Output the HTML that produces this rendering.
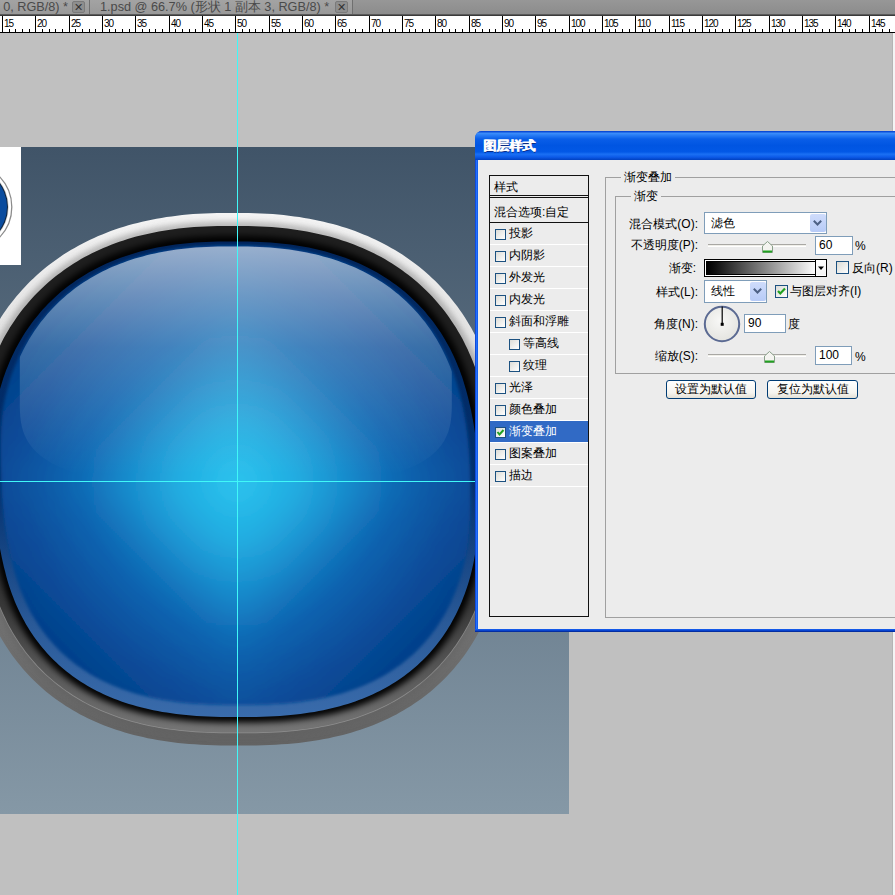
<!DOCTYPE html>
<html><head><meta charset="utf-8">
<style>
*{box-sizing:border-box}
html,body{margin:0;padding:0}
body{width:895px;height:895px;overflow:hidden;position:relative;background:#c0c0c0;font-family:"Liberation Sans",sans-serif;}
.abs{position:absolute}
#tabs{left:0;top:0;width:895px;height:15px;background:linear-gradient(#979797,#8c8c8c);border-bottom:1px solid #5a5a5a}
.tab{position:absolute;top:0;height:14px;background:linear-gradient(#a3a3a3,#999);border-right:1px solid #6f6f6f;color:#4a4a4a;font-size:12.7px;line-height:14px;white-space:nowrap;overflow:hidden}
.cls{position:absolute;top:1px;width:13px;height:12px;border:1px solid #7a7a7a;border-radius:2px;background:#8e8e8e;color:#333;font-size:11px;line-height:10px;text-align:center}
#ruler{left:0;top:15px;width:895px;height:18px;background:#fff;border-top:1px solid #3a3a3a;border-bottom:1px solid #000}
.mj{position:absolute;top:0;width:1px;height:17px;background:#000}
.mn{position:absolute;top:13px;width:1px;height:4px;background:#000}
.lb{position:absolute;top:3px;font-size:10px;line-height:10px;color:#000;letter-spacing:-1px}
#canvas{left:0;top:147px;width:569px;height:667px;background:linear-gradient(#405468,#8598a6)}
#wrect{left:0;top:147px;width:21px;height:118px;background:#fff;overflow:hidden}
#svg{left:0;top:0}
.gv{left:237px;top:33px;width:1px;height:862px;background:#40f8f8}
.gh{left:0;top:481px;width:475px;height:1px;background:#40f8f8}
#dlg{left:475px;top:131px;width:440px;height:501px;background:#0a50d8;border-radius:7px 7px 0 0}
#title{left:0;top:0;width:440px;height:29px;border-radius:7px 7px 0 0;background:linear-gradient(#0a4ad6 0,#0a4ad6 1px,#3f90fa 2px,#2a7ef6 4px,#0a5ee8 8px,#0055e2 50%,#0258e6 72%,#1a70f4 80%,#0c5ae8 90%,#0040c0 100%)}
#title span{position:absolute;left:8px;top:6px;color:#fff;font-weight:bold;font-size:13px;text-shadow:0.6px 0 0 #fff,1.4px 1px 0 #0a2a80}
#content{left:3px;top:29px;width:437px;height:469px;background:#ececec}
#list{left:11px;top:15px;width:100px;height:442px;border:1px solid #111;background:#ececec}
.row{position:absolute;left:0;width:98px;height:22px;border-bottom:1px solid #fff;font-size:12px;line-height:22px;color:#000;white-space:nowrap}
.cb{position:absolute;top:6px;width:11px;height:11px;border:1px solid #1c5180;background:linear-gradient(135deg,#dcdcd7,#fff)}
.grp{position:absolute;border:1px solid #a0a0a0}
.glab{position:absolute;background:#ececec;font-size:12px;line-height:14px;padding:0 3px;color:#000}
.lab{position:absolute;font-size:12px;line-height:14px;color:#000;text-align:right;white-space:nowrap}
.combo{position:absolute;border:1px solid #7f9db9;background:#fff;font-size:12px;line-height:19px;padding-left:6px}
.dd{position:absolute;right:1px;top:1px;bottom:1px;width:15px;background:linear-gradient(#d6e3fc,#b4c9f6);border-radius:2px}
.inp{position:absolute;border:1px solid #7f9db9;background:#fff;font-size:12px;line-height:16px;padding-left:3px}
.track{position:absolute;height:3px;border-top:1px solid #9d9c99;background:#ecebe6;border-bottom:1px solid #fff}
.thumb{position:absolute;width:11px;height:12px}
.btn{position:absolute;border:1px solid #003c74;border-radius:3px;background:linear-gradient(#fff,#f0f0ea 80%,#d6d0c5);font-size:12px;line-height:17px;text-align:center}
.plab{position:absolute;font-size:12px;line-height:14px;color:#000;white-space:nowrap}
.pgrp{position:absolute;border:1px solid #a0a0a0;box-sizing:border-box}
.pgl{position:absolute;background:#ececec;font-size:12px;line-height:14px;padding:0 3px;color:#000}
.pcombo{position:absolute;border:1px solid #7f9db9;background:#fff;font-size:12px;padding-left:6px;box-sizing:border-box}
.pdd{position:absolute;background:linear-gradient(#cfdcfb,#b7cbf7);border-radius:2px}
.pinp{position:absolute;border:1px solid #7f9db9;background:#fff;font-size:12px;padding-left:3px;box-sizing:border-box}
.pcb{position:absolute;width:13px;height:13px;border:1px solid #1c5180;background:linear-gradient(135deg,#dcdcd7,#fdfdfd);box-sizing:border-box}
.ptrack{position:absolute;height:3px;border-top:1px solid #a9a8a4;background:#f0efe9;border-bottom:1px solid #fff;box-sizing:border-box}
.pbtn{position:absolute;border:1px solid #003c74;border-radius:3px;background:linear-gradient(#fff,#f5f4ef 70%,#e3e0d6);font-size:12px;text-align:center;box-sizing:border-box}
</style></head><body>
<div id="tabs" class="abs">
  <div class="tab" style="left:0;width:90px"><span style="position:absolute;right:21px">0, RGB/8) *</span><div class="cls" style="left:72px">&#x2715;</div></div>
  <div class="tab" style="left:90px;width:263px"><span style="position:absolute;left:10px">1.psd @ 66.7% (形状 1 副本 3, RGB/8) *</span><div class="cls" style="left:245px">&#x2715;</div></div>
</div>
<div id="ruler" class="abs"><div class="mj" style="left:2px"></div><div class="mn" style="left:9px"></div><div class="mn" style="left:15px"></div><div class="mn" style="left:22px"></div><div class="mn" style="left:29px"></div><div class="mj" style="left:35px"></div><div class="mn" style="left:42px"></div><div class="mn" style="left:49px"></div><div class="mn" style="left:55px"></div><div class="mn" style="left:62px"></div><div class="mj" style="left:69px"></div><div class="mn" style="left:75px"></div><div class="mn" style="left:82px"></div><div class="mn" style="left:89px"></div><div class="mn" style="left:95px"></div><div class="mj" style="left:102px"></div><div class="mn" style="left:109px"></div><div class="mn" style="left:115px"></div><div class="mn" style="left:122px"></div><div class="mn" style="left:129px"></div><div class="mj" style="left:135px"></div><div class="mn" style="left:142px"></div><div class="mn" style="left:149px"></div><div class="mn" style="left:155px"></div><div class="mn" style="left:162px"></div><div class="mj" style="left:169px"></div><div class="mn" style="left:175px"></div><div class="mn" style="left:182px"></div><div class="mn" style="left:189px"></div><div class="mn" style="left:195px"></div><div class="mj" style="left:202px"></div><div class="mn" style="left:209px"></div><div class="mn" style="left:215px"></div><div class="mn" style="left:222px"></div><div class="mn" style="left:229px"></div><div class="mj" style="left:235px"></div><div class="mn" style="left:242px"></div><div class="mn" style="left:249px"></div><div class="mn" style="left:255px"></div><div class="mn" style="left:262px"></div><div class="mj" style="left:269px"></div><div class="mn" style="left:275px"></div><div class="mn" style="left:282px"></div><div class="mn" style="left:289px"></div><div class="mn" style="left:295px"></div><div class="mj" style="left:302px"></div><div class="mn" style="left:309px"></div><div class="mn" style="left:315px"></div><div class="mn" style="left:322px"></div><div class="mn" style="left:329px"></div><div class="mj" style="left:335px"></div><div class="mn" style="left:342px"></div><div class="mn" style="left:349px"></div><div class="mn" style="left:355px"></div><div class="mn" style="left:362px"></div><div class="mj" style="left:369px"></div><div class="mn" style="left:375px"></div><div class="mn" style="left:382px"></div><div class="mn" style="left:389px"></div><div class="mn" style="left:395px"></div><div class="mj" style="left:402px"></div><div class="mn" style="left:409px"></div><div class="mn" style="left:415px"></div><div class="mn" style="left:422px"></div><div class="mn" style="left:429px"></div><div class="mj" style="left:435px"></div><div class="mn" style="left:442px"></div><div class="mn" style="left:449px"></div><div class="mn" style="left:455px"></div><div class="mn" style="left:462px"></div><div class="mj" style="left:469px"></div><div class="mn" style="left:475px"></div><div class="mn" style="left:482px"></div><div class="mn" style="left:489px"></div><div class="mn" style="left:495px"></div><div class="mj" style="left:502px"></div><div class="mn" style="left:509px"></div><div class="mn" style="left:515px"></div><div class="mn" style="left:522px"></div><div class="mn" style="left:529px"></div><div class="mj" style="left:535px"></div><div class="mn" style="left:542px"></div><div class="mn" style="left:549px"></div><div class="mn" style="left:555px"></div><div class="mn" style="left:562px"></div><div class="mj" style="left:569px"></div><div class="mn" style="left:575px"></div><div class="mn" style="left:582px"></div><div class="mn" style="left:589px"></div><div class="mn" style="left:595px"></div><div class="mj" style="left:602px"></div><div class="mn" style="left:609px"></div><div class="mn" style="left:615px"></div><div class="mn" style="left:622px"></div><div class="mn" style="left:629px"></div><div class="mj" style="left:635px"></div><div class="mn" style="left:642px"></div><div class="mn" style="left:649px"></div><div class="mn" style="left:655px"></div><div class="mn" style="left:662px"></div><div class="mj" style="left:669px"></div><div class="mn" style="left:675px"></div><div class="mn" style="left:682px"></div><div class="mn" style="left:689px"></div><div class="mn" style="left:695px"></div><div class="mj" style="left:702px"></div><div class="mn" style="left:709px"></div><div class="mn" style="left:715px"></div><div class="mn" style="left:722px"></div><div class="mn" style="left:729px"></div><div class="mj" style="left:735px"></div><div class="mn" style="left:742px"></div><div class="mn" style="left:749px"></div><div class="mn" style="left:755px"></div><div class="mn" style="left:762px"></div><div class="mj" style="left:769px"></div><div class="mn" style="left:775px"></div><div class="mn" style="left:782px"></div><div class="mn" style="left:789px"></div><div class="mn" style="left:795px"></div><div class="mj" style="left:802px"></div><div class="mn" style="left:809px"></div><div class="mn" style="left:815px"></div><div class="mn" style="left:822px"></div><div class="mn" style="left:829px"></div><div class="mj" style="left:835px"></div><div class="mn" style="left:842px"></div><div class="mn" style="left:849px"></div><div class="mn" style="left:855px"></div><div class="mn" style="left:862px"></div><div class="mj" style="left:869px"></div><div class="mn" style="left:875px"></div><div class="mn" style="left:882px"></div><div class="mn" style="left:889px"></div><div class="mn" style="left:895px"></div><div class="lb" style="left:4px">15</div><div class="lb" style="left:37px">20</div><div class="lb" style="left:71px">25</div><div class="lb" style="left:104px">30</div><div class="lb" style="left:137px">35</div><div class="lb" style="left:171px">40</div><div class="lb" style="left:204px">45</div><div class="lb" style="left:237px">50</div><div class="lb" style="left:271px">55</div><div class="lb" style="left:304px">60</div><div class="lb" style="left:337px">65</div><div class="lb" style="left:371px">70</div><div class="lb" style="left:404px">75</div><div class="lb" style="left:437px">80</div><div class="lb" style="left:471px">85</div><div class="lb" style="left:504px">90</div><div class="lb" style="left:537px">95</div><div class="lb" style="left:571px">100</div><div class="lb" style="left:604px">105</div><div class="lb" style="left:637px">110</div><div class="lb" style="left:671px">115</div><div class="lb" style="left:704px">120</div><div class="lb" style="left:737px">125</div><div class="lb" style="left:771px">130</div><div class="lb" style="left:804px">135</div><div class="lb" style="left:837px">140</div><div class="lb" style="left:871px">145</div></div>
<div id="canvas" class="abs"></div>
<div id="wrect" class="abs">
 <svg width="21" height="118" style="position:absolute;left:0;top:0">
  <circle cx="-31.8" cy="60" r="43.6" fill="#fff" stroke="#8c8c8c" stroke-width="1.3"/>
  <circle cx="-31.8" cy="60" r="40.6" fill="#d8d8d8"/>
  <circle cx="-31.8" cy="60" r="39.8" fill="#10243c"/>
  <circle cx="-31.8" cy="60" r="38.8" fill="#0a4c9e"/>
 </svg>
</div>
<svg id="svg" class="abs" width="895" height="895">
 <defs>
  <linearGradient id="gOuter" x1="0" y1="213" x2="0" y2="747" gradientUnits="userSpaceOnUse">
   <stop offset="0" stop-color="#f4f4f4"/><stop offset="0.3" stop-color="#dedede"/>
   <stop offset="0.55" stop-color="#969696"/><stop offset="0.75" stop-color="#727272"/><stop offset="1" stop-color="#626262"/>
  </linearGradient>
  <linearGradient id="gRing" x1="0" y1="226" x2="0" y2="734" gradientUnits="userSpaceOnUse">
   <stop offset="0" stop-color="#1e1e1e"/><stop offset="0.5" stop-color="#1e1e1e"/><stop offset="0.75" stop-color="#383838"/><stop offset="1" stop-color="#767676"/>
  </linearGradient>
  <linearGradient id="gLine" x1="0" y1="226" x2="0" y2="734" gradientUnits="userSpaceOnUse">
   <stop offset="0" stop-color="#d0d0d0" stop-opacity="0"/><stop offset="0.5" stop-color="#b0b0b0" stop-opacity="0"/><stop offset="0.75" stop-color="#b0b0b0" stop-opacity="0.35"/><stop offset="1" stop-color="#b4b4b4" stop-opacity="0.55"/>
  </linearGradient>
  <clipPath id="clipBodyIn"><path d="M469.2,476.6 L469.4,485.9 L469.4,492.9 L469.4,499.2 L469.4,505.2 L469.3,510.8 L469.1,516.2 L468.8,521.4 L468.5,526.4 L468.1,531.3 L467.7,536.0 L467.2,540.6 L466.6,545.0 L465.9,549.3 L465.2,553.4 L464.5,557.4 L463.7,561.3 L462.8,565.1 L461.8,568.9 L460.8,572.7 L459.7,576.4 L458.5,580.0 L457.3,583.6 L456.1,587.1 L454.8,590.5 L453.4,593.9 L452.0,597.2 L450.6,600.5 L449.1,603.6 L447.5,606.8 L445.9,609.9 L444.3,612.9 L442.6,615.8 L440.9,618.8 L439.1,621.6 L437.3,624.4 L435.4,627.2 L433.5,629.9 L431.5,632.5 L429.5,635.1 L427.4,637.7 L425.3,640.2 L423.1,642.6 L420.9,645.0 L418.7,647.4 L416.4,649.7 L414.0,652.0 L411.6,654.2 L409.1,656.3 L406.6,658.5 L404.1,660.6 L401.5,662.6 L398.8,664.6 L396.1,666.5 L393.3,668.4 L390.5,670.3 L387.6,672.1 L384.7,673.8 L381.7,675.5 L378.7,677.2 L375.6,678.8 L372.4,680.4 L369.2,681.9 L365.9,683.4 L362.6,684.8 L359.2,686.2 L355.7,687.5 L352.2,688.8 L348.6,690.1 L344.9,691.3 L341.2,692.4 L337.4,693.5 L333.5,694.5 L329.5,695.5 L325.5,696.4 L321.3,697.3 L317.1,698.1 L312.8,698.9 L308.4,699.6 L303.9,700.3 L299.2,700.9 L294.5,701.5 L289.6,702.0 L284.5,702.4 L279.2,702.8 L273.8,703.1 L268.1,703.4 L262.0,703.6 L255.5,703.8 L248.2,703.9 L238.3,703.9 L228.4,703.9 L221.1,703.8 L214.6,703.6 L208.5,703.4 L202.8,703.1 L197.4,702.8 L192.1,702.4 L187.0,702.0 L182.1,701.5 L177.4,700.9 L172.7,700.3 L168.2,699.6 L163.8,698.9 L159.5,698.1 L155.3,697.3 L151.1,696.4 L147.1,695.5 L143.1,694.5 L139.2,693.5 L135.4,692.4 L131.7,691.3 L128.0,690.1 L124.4,688.8 L120.9,687.5 L117.4,686.2 L114.0,684.8 L110.7,683.4 L107.4,681.9 L104.2,680.4 L101.0,678.8 L97.9,677.2 L94.9,675.5 L91.9,673.8 L89.0,672.1 L86.1,670.3 L83.3,668.4 L80.5,666.5 L77.8,664.6 L75.1,662.6 L72.5,660.6 L70.0,658.5 L67.5,656.3 L65.0,654.2 L62.6,652.0 L60.2,649.7 L57.9,647.4 L55.7,645.0 L53.5,642.6 L51.3,640.2 L49.2,637.7 L47.1,635.1 L45.1,632.5 L43.1,629.9 L41.2,627.2 L39.3,624.4 L37.5,621.6 L35.7,618.8 L34.0,615.8 L32.3,612.9 L30.7,609.9 L29.1,606.8 L27.5,603.6 L26.0,600.5 L24.6,597.2 L23.2,593.9 L21.8,590.5 L20.5,587.1 L19.3,583.6 L18.1,580.0 L16.9,576.4 L15.8,572.7 L14.8,568.9 L13.8,564.9 L12.8,560.8 L11.8,556.6 L10.8,552.2 L9.9,547.8 L9.1,543.3 L8.2,538.6 L7.4,533.8 L6.7,529.0 L5.9,524.0 L5.3,518.8 L4.6,513.6 L4.1,508.1 L3.5,502.5 L3.1,496.6 L2.6,490.4 L2.3,483.6 L2.0,475.1 L1.7,465.7 L1.6,458.9 L1.5,452.9 L1.4,447.3 L1.5,442.1 L1.6,437.2 L1.8,432.4 L2.0,427.9 L2.3,423.5 L2.7,419.2 L3.2,415.0 L3.8,411.0 L4.4,407.0 L5.1,403.0 L5.9,399.2 L6.7,395.4 L7.6,391.6 L8.7,387.8 L9.8,384.0 L10.9,380.2 L12.2,376.5 L13.4,372.9 L14.7,369.3 L16.1,365.8 L17.6,362.3 L19.0,358.9 L20.6,355.6 L22.2,352.3 L23.8,349.0 L25.5,345.8 L27.2,342.7 L29.0,339.6 L30.9,336.6 L32.8,333.6 L34.7,330.6 L36.7,327.7 L38.7,324.9 L40.8,322.1 L43.0,319.4 L45.2,316.7 L47.4,314.0 L49.7,311.4 L52.0,308.9 L54.4,306.4 L56.9,303.9 L59.4,301.5 L61.9,299.2 L64.5,296.9 L67.2,294.6 L69.9,292.4 L72.6,290.3 L75.4,288.1 L78.2,286.1 L81.1,284.1 L84.1,282.1 L87.1,280.2 L90.2,278.3 L93.3,276.5 L96.4,274.7 L99.6,273.0 L102.9,271.3 L106.2,269.7 L109.6,268.1 L113.1,266.6 L116.5,265.2 L120.1,263.7 L123.7,262.4 L127.4,261.1 L131.1,259.8 L134.9,258.6 L138.7,257.5 L142.7,256.4 L146.6,255.3 L150.7,254.3 L154.8,253.4 L159.0,252.5 L163.3,251.7 L167.6,251.0 L172.1,250.3 L176.6,249.6 L181.3,249.0 L186.0,248.5 L190.9,248.0 L195.9,247.6 L201.1,247.3 L206.4,247.0 L212.1,246.8 L218.0,246.6 L224.6,246.5 L232.9,246.5 L241.2,246.5 L247.8,246.6 L253.7,246.8 L259.4,247.0 L264.7,247.3 L269.9,247.6 L274.9,248.0 L279.8,248.5 L284.5,249.0 L289.2,249.6 L293.7,250.3 L298.2,251.0 L302.5,251.7 L306.8,252.5 L311.0,253.4 L315.1,254.3 L319.2,255.3 L323.1,256.4 L327.1,257.5 L330.9,258.6 L334.7,259.8 L338.4,261.1 L342.1,262.4 L345.7,263.7 L349.3,265.2 L352.7,266.6 L356.2,268.1 L359.6,269.7 L362.9,271.3 L366.2,273.0 L369.4,274.7 L372.5,276.5 L375.6,278.3 L378.7,280.2 L381.7,282.1 L384.7,284.1 L387.6,286.1 L390.4,288.1 L393.2,290.3 L395.9,292.4 L398.6,294.6 L401.3,296.9 L403.9,299.2 L406.4,301.5 L408.9,303.9 L411.4,306.4 L413.8,308.9 L416.1,311.4 L418.4,314.0 L420.6,316.7 L422.8,319.4 L425.0,322.1 L427.1,324.9 L429.1,327.7 L431.1,330.6 L433.0,333.6 L434.9,336.6 L436.8,339.6 L438.6,342.7 L440.3,345.8 L442.0,349.0 L443.6,352.3 L445.2,355.6 L446.8,358.9 L448.2,362.3 L449.7,365.8 L451.1,369.3 L452.4,372.9 L453.6,376.5 L454.9,380.2 L456.0,384.0 L457.1,387.8 L458.2,391.8 L459.3,395.9 L460.3,400.1 L461.2,404.3 L462.2,408.5 L463.0,412.8 L463.8,417.1 L464.6,421.5 L465.3,425.9 L466.0,430.5 L466.6,435.2 L467.1,440.0 L467.6,445.0 L468.0,450.2 L468.4,455.7 L468.7,461.5 L469.0,468.1Z"/></clipPath>
  <clipPath id="clipOuter"><path d="M506.8,480.0 L506.9,489.3 L507.0,496.6 L507.0,503.4 L507.0,509.7 L506.8,515.9 L506.6,521.8 L506.4,527.5 L506.0,533.1 L505.6,538.5 L505.1,543.9 L504.5,549.1 L503.8,554.2 L503.1,559.2 L502.3,564.0 L501.3,568.8 L500.4,573.5 L499.3,578.1 L498.1,582.6 L496.9,587.0 L495.6,591.4 L494.3,595.7 L492.8,599.9 L491.3,604.1 L489.8,608.2 L488.2,612.2 L486.5,616.2 L484.8,620.1 L483.0,623.9 L481.1,627.7 L479.1,631.5 L477.2,635.1 L475.1,638.8 L473.0,642.3 L470.8,645.8 L468.5,649.3 L466.2,652.7 L463.9,656.0 L461.4,659.3 L458.9,662.5 L456.4,665.6 L453.8,668.7 L451.1,671.8 L448.3,674.7 L445.5,677.7 L442.7,680.5 L439.8,683.3 L436.8,686.1 L433.8,688.8 L430.7,691.4 L427.5,694.0 L424.3,696.5 L421.0,698.9 L417.7,701.3 L414.3,703.6 L410.8,705.9 L407.3,708.1 L403.7,710.2 L400.1,712.3 L396.4,714.4 L392.7,716.3 L388.9,718.2 L385.0,720.0 L381.1,721.8 L377.1,723.5 L373.0,725.2 L368.9,726.8 L364.7,728.3 L360.5,729.7 L356.2,731.1 L351.8,732.5 L347.4,733.7 L342.9,734.9 L338.3,736.1 L333.6,737.1 L328.9,738.2 L324.1,739.1 L319.2,740.0 L314.2,740.8 L309.1,741.5 L303.9,742.2 L298.6,742.9 L293.1,743.4 L287.5,743.9 L281.8,744.3 L275.8,744.7 L269.6,745.0 L263.1,745.2 L256.2,745.4 L248.5,745.5 L238.3,745.5 L228.1,745.5 L220.4,745.4 L213.5,745.2 L207.0,745.0 L200.8,744.7 L194.8,744.3 L189.1,743.9 L183.5,743.4 L178.0,742.9 L172.7,742.2 L167.5,741.5 L162.4,740.8 L157.4,740.0 L152.5,739.1 L147.7,738.2 L143.0,737.1 L138.3,736.1 L133.7,734.9 L129.2,733.7 L124.8,732.5 L120.4,731.1 L116.1,729.7 L111.9,728.3 L107.7,726.8 L103.6,725.2 L99.5,723.5 L95.5,721.8 L91.6,720.0 L87.7,718.2 L83.9,716.3 L80.2,714.4 L76.5,712.3 L72.9,710.2 L69.3,708.1 L65.8,705.9 L62.3,703.6 L58.9,701.3 L55.6,698.9 L52.3,696.5 L49.1,694.0 L45.9,691.4 L42.8,688.8 L39.8,686.1 L36.8,683.3 L33.9,680.5 L31.1,677.7 L28.3,674.7 L25.5,671.8 L22.8,668.7 L20.2,665.6 L17.7,662.5 L15.2,659.3 L12.7,656.0 L10.4,652.7 L8.1,649.3 L5.8,645.8 L3.6,642.3 L1.5,638.8 L-0.6,635.1 L-2.5,631.5 L-4.5,627.7 L-6.4,623.9 L-8.2,620.1 L-9.9,616.2 L-11.6,612.2 L-13.2,608.2 L-14.7,604.1 L-16.2,599.9 L-17.7,595.7 L-19.0,591.4 L-20.3,587.0 L-21.5,582.6 L-22.7,578.1 L-23.8,573.5 L-24.9,568.8 L-25.9,564.0 L-26.9,559.2 L-27.9,554.2 L-28.8,549.1 L-29.7,543.9 L-30.5,538.5 L-31.3,533.1 L-32.0,527.5 L-32.7,521.8 L-33.4,515.9 L-33.9,509.7 L-34.4,503.4 L-34.9,496.6 L-35.3,489.3 L-35.6,480.0 L-35.9,470.8 L-36.0,463.7 L-36.1,457.3 L-36.2,451.3 L-36.1,445.6 L-36.0,440.0 L-35.8,434.7 L-35.5,429.4 L-35.1,424.3 L-34.6,419.3 L-34.1,414.4 L-33.4,409.6 L-32.7,404.8 L-31.8,400.1 L-30.9,395.4 L-29.9,390.8 L-28.8,386.2 L-27.5,381.7 L-26.2,377.2 L-24.9,372.8 L-23.5,368.5 L-22.0,364.2 L-20.4,360.0 L-18.8,355.8 L-17.1,351.7 L-15.3,347.6 L-13.5,343.6 L-11.6,339.7 L-9.6,335.8 L-7.6,331.9 L-5.5,328.1 L-3.3,324.4 L-1.1,320.7 L1.2,317.1 L3.5,313.6 L6.0,310.1 L8.4,306.6 L11.0,303.2 L13.6,299.9 L16.3,296.6 L19.0,293.4 L21.8,290.3 L24.6,287.2 L27.6,284.1 L30.5,281.1 L33.6,278.2 L36.7,275.3 L39.8,272.5 L43.0,269.8 L46.3,267.1 L49.6,264.5 L53.0,261.9 L56.5,259.4 L60.0,257.0 L63.5,254.6 L67.2,252.3 L70.8,250.0 L74.6,247.9 L78.4,245.7 L82.2,243.7 L86.1,241.7 L90.1,239.8 L94.1,237.9 L98.2,236.1 L102.3,234.4 L106.5,232.7 L110.7,231.1 L115.0,229.5 L119.4,228.1 L123.8,226.7 L128.3,225.3 L132.9,224.1 L137.5,222.9 L142.1,221.7 L146.9,220.7 L151.7,219.7 L156.5,218.7 L161.5,217.9 L166.5,217.1 L171.6,216.4 L176.9,215.7 L182.2,215.1 L187.6,214.6 L193.1,214.1 L198.8,213.8 L204.7,213.5 L210.8,213.2 L217.3,213.0 L224.2,212.9 L232.9,212.9 L241.6,212.9 L248.5,213.0 L255.0,213.2 L261.1,213.5 L267.0,213.8 L272.7,214.1 L278.2,214.6 L283.6,215.1 L288.9,215.7 L294.2,216.4 L299.3,217.1 L304.3,217.9 L309.3,218.7 L314.1,219.7 L318.9,220.7 L323.7,221.7 L328.3,222.9 L332.9,224.1 L337.5,225.3 L342.0,226.7 L346.4,228.1 L350.8,229.5 L355.1,231.1 L359.3,232.7 L363.5,234.4 L367.6,236.1 L371.7,237.9 L375.7,239.8 L379.7,241.7 L383.6,243.7 L387.4,245.7 L391.2,247.9 L395.0,250.0 L398.6,252.3 L402.3,254.6 L405.8,257.0 L409.3,259.4 L412.8,261.9 L416.2,264.5 L419.5,267.1 L422.8,269.8 L426.0,272.5 L429.1,275.3 L432.2,278.2 L435.3,281.1 L438.2,284.1 L441.2,287.2 L444.0,290.3 L446.8,293.4 L449.5,296.6 L452.2,299.9 L454.8,303.2 L457.4,306.6 L459.8,310.1 L462.3,313.6 L464.6,317.1 L466.9,320.7 L469.1,324.4 L471.3,328.1 L473.4,331.9 L475.4,335.8 L477.4,339.7 L479.3,343.6 L481.1,347.6 L482.9,351.7 L484.6,355.8 L486.2,360.0 L487.8,364.2 L489.3,368.5 L490.7,372.8 L492.0,377.2 L493.3,381.7 L494.6,386.2 L495.7,390.8 L496.9,395.4 L497.9,400.1 L499.0,404.8 L499.9,409.6 L500.8,414.4 L501.7,419.3 L502.5,424.3 L503.2,429.4 L503.9,434.7 L504.5,440.0 L505.0,445.6 L505.5,451.3 L505.9,457.3 L506.3,463.7 L506.6,470.8Z"/></clipPath>
  <clipPath id="clipR2"><path d="M493.8,480.2 L494.0,489.5 L494.0,496.7 L494.0,503.3 L494.0,509.5 L493.8,515.5 L493.6,521.2 L493.4,526.8 L493.0,532.2 L492.6,537.4 L492.1,542.5 L491.6,547.5 L490.9,552.4 L490.2,557.1 L489.5,561.7 L488.6,566.3 L487.7,570.7 L486.7,575.0 L485.6,579.2 L484.4,583.4 L483.2,587.6 L481.9,591.6 L480.5,595.6 L479.1,599.6 L477.7,603.4 L476.2,607.2 L474.6,611.0 L472.9,614.7 L471.2,618.3 L469.5,621.9 L467.7,625.4 L465.8,628.8 L463.9,632.2 L461.9,635.6 L459.8,638.8 L457.7,642.1 L455.6,645.2 L453.3,648.3 L451.1,651.4 L448.7,654.4 L446.4,657.3 L443.9,660.2 L441.4,663.1 L438.9,665.9 L436.3,668.6 L433.6,671.3 L430.9,673.9 L428.1,676.4 L425.2,678.9 L422.3,681.4 L419.4,683.8 L416.4,686.1 L413.3,688.4 L410.2,690.7 L407.0,692.8 L403.8,695.0 L400.5,697.0 L397.2,699.0 L393.8,701.0 L390.3,702.9 L386.8,704.7 L383.2,706.5 L379.5,708.2 L375.8,709.9 L372.1,711.5 L368.2,713.1 L364.4,714.6 L360.4,716.0 L356.4,717.4 L352.3,718.7 L348.1,720.0 L343.9,721.2 L339.6,722.3 L335.2,723.4 L330.8,724.4 L326.3,725.4 L321.7,726.3 L317.0,727.2 L312.2,727.9 L307.3,728.7 L302.3,729.3 L297.1,729.9 L291.9,730.5 L286.5,730.9 L280.9,731.4 L275.1,731.7 L269.1,732.0 L262.7,732.2 L255.9,732.4 L248.4,732.5 L238.3,732.5 L228.2,732.5 L220.7,732.4 L213.9,732.2 L207.5,732.0 L201.5,731.7 L195.7,731.4 L190.1,730.9 L184.7,730.5 L179.5,729.9 L174.3,729.3 L169.3,728.7 L164.4,727.9 L159.6,727.2 L154.9,726.3 L150.3,725.4 L145.8,724.4 L141.4,723.4 L137.0,722.3 L132.7,721.2 L128.5,720.0 L124.3,718.7 L120.2,717.4 L116.2,716.0 L112.2,714.6 L108.4,713.1 L104.5,711.5 L100.8,709.9 L97.1,708.2 L93.4,706.5 L89.8,704.7 L86.3,702.9 L82.8,701.0 L79.4,699.0 L76.1,697.0 L72.8,695.0 L69.6,692.8 L66.4,690.7 L63.3,688.4 L60.2,686.1 L57.2,683.8 L54.3,681.4 L51.4,678.9 L48.5,676.4 L45.7,673.9 L43.0,671.3 L40.3,668.6 L37.7,665.9 L35.2,663.1 L32.7,660.2 L30.2,657.3 L27.9,654.4 L25.5,651.4 L23.3,648.3 L21.0,645.2 L18.9,642.1 L16.8,638.8 L14.7,635.6 L12.7,632.2 L10.8,628.8 L8.9,625.4 L7.1,621.9 L5.4,618.3 L3.7,614.7 L2.0,611.0 L0.4,607.2 L-1.1,603.4 L-2.5,599.6 L-3.9,595.6 L-5.3,591.6 L-6.6,587.6 L-7.8,583.4 L-9.0,579.2 L-10.1,574.9 L-11.2,570.5 L-12.2,566.0 L-13.2,561.3 L-14.2,556.6 L-15.1,551.8 L-16.0,546.8 L-16.9,541.8 L-17.7,536.6 L-18.4,531.3 L-19.1,525.9 L-19.8,520.3 L-20.4,514.6 L-21.0,508.6 L-21.5,502.4 L-21.9,495.9 L-22.3,488.7 L-22.6,479.7 L-22.9,470.4 L-23.0,463.5 L-23.1,457.2 L-23.2,451.3 L-23.1,445.8 L-23.0,440.4 L-22.8,435.3 L-22.5,430.3 L-22.2,425.4 L-21.7,420.7 L-21.2,416.0 L-20.6,411.4 L-19.9,406.9 L-19.1,402.5 L-18.2,398.1 L-17.2,393.8 L-16.2,389.5 L-15.0,385.2 L-13.8,380.9 L-12.5,376.8 L-11.1,372.6 L-9.7,368.6 L-8.2,364.6 L-6.7,360.6 L-5.1,356.7 L-3.4,352.9 L-1.7,349.1 L0.1,345.4 L1.9,341.7 L3.8,338.1 L5.8,334.6 L7.9,331.0 L9.9,327.6 L12.1,324.2 L14.3,320.9 L16.6,317.6 L18.9,314.3 L21.3,311.1 L23.7,308.0 L26.3,304.9 L28.8,301.9 L31.4,299.0 L34.1,296.1 L36.8,293.2 L39.6,290.4 L42.5,287.7 L45.4,285.0 L48.4,282.3 L51.4,279.8 L54.4,277.2 L57.6,274.8 L60.8,272.4 L64.0,270.0 L67.3,267.7 L70.7,265.5 L74.1,263.3 L77.5,261.2 L81.0,259.1 L84.6,257.1 L88.2,255.2 L91.9,253.3 L95.7,251.5 L99.5,249.7 L103.3,248.0 L107.2,246.4 L111.2,244.8 L115.2,243.3 L119.3,241.8 L123.5,240.4 L127.7,239.1 L131.9,237.8 L136.2,236.6 L140.6,235.5 L145.1,234.4 L149.6,233.4 L154.2,232.4 L158.9,231.5 L163.6,230.7 L168.5,229.9 L173.4,229.2 L178.4,228.6 L183.5,228.0 L188.7,227.5 L194.1,227.1 L199.6,226.7 L205.3,226.4 L211.3,226.2 L217.5,226.0 L224.4,225.9 L232.9,225.9 L241.4,225.9 L248.3,226.0 L254.5,226.2 L260.5,226.4 L266.2,226.7 L271.7,227.1 L277.1,227.5 L282.3,228.0 L287.4,228.6 L292.4,229.2 L297.3,229.9 L302.2,230.7 L306.9,231.5 L311.6,232.4 L316.2,233.4 L320.7,234.4 L325.2,235.5 L329.6,236.6 L333.9,237.8 L338.1,239.1 L342.3,240.4 L346.5,241.8 L350.6,243.3 L354.6,244.8 L358.6,246.4 L362.5,248.0 L366.3,249.7 L370.1,251.5 L373.9,253.3 L377.6,255.2 L381.2,257.1 L384.8,259.1 L388.3,261.2 L391.7,263.3 L395.1,265.5 L398.5,267.7 L401.8,270.0 L405.0,272.4 L408.2,274.8 L411.4,277.2 L414.4,279.8 L417.4,282.3 L420.4,285.0 L423.3,287.7 L426.2,290.4 L429.0,293.2 L431.7,296.1 L434.4,299.0 L437.0,301.9 L439.5,304.9 L442.1,308.0 L444.5,311.1 L446.9,314.3 L449.2,317.6 L451.5,320.9 L453.7,324.2 L455.9,327.6 L457.9,331.0 L460.0,334.6 L462.0,338.1 L463.9,341.7 L465.7,345.4 L467.5,349.1 L469.2,352.9 L470.9,356.7 L472.5,360.6 L474.0,364.6 L475.5,368.6 L476.9,372.6 L478.3,376.8 L479.6,380.9 L480.8,385.2 L482.0,389.5 L483.1,393.9 L484.2,398.4 L485.2,402.9 L486.2,407.4 L487.2,412.0 L488.0,416.7 L488.9,421.4 L489.6,426.3 L490.3,431.2 L491.0,436.2 L491.6,441.4 L492.1,446.7 L492.6,452.3 L493.0,458.1 L493.3,464.4 L493.6,471.2Z"/></clipPath>
  <filter id="blur3" x="-10%" y="-10%" width="120%" height="120%"><feGaussianBlur stdDeviation="3"/></filter>
  <linearGradient id="gBand" x1="0" y1="240" x2="0" y2="721" gradientUnits="userSpaceOnUse">
   <stop offset="0" stop-color="#00245a"/><stop offset="0.5" stop-color="#02306e"/><stop offset="0.8" stop-color="#2a5a98"/><stop offset="1" stop-color="#3a6cac"/>
  </linearGradient>
<linearGradient id="gDq1" gradientUnits="userSpaceOnUse" x1="237" y1="481" x2="477.0" y2="241.0"><stop offset="0" stop-color="#2bc5ef"/><stop offset="0.125" stop-color="#27b5e6"/><stop offset="0.25" stop-color="#1d94d4"/><stop offset="0.375" stop-color="#1068b4"/><stop offset="0.54" stop-color="#0a50a0"/><stop offset="0.75" stop-color="#023f8a"/><stop offset="1" stop-color="#01357a"/></linearGradient>
<linearGradient id="gDq2" gradientUnits="userSpaceOnUse" x1="237" y1="481" x2="-3.0" y2="241.0"><stop offset="0" stop-color="#2bc5ef"/><stop offset="0.125" stop-color="#27b5e6"/><stop offset="0.25" stop-color="#1d94d4"/><stop offset="0.375" stop-color="#1068b4"/><stop offset="0.54" stop-color="#0a50a0"/><stop offset="0.75" stop-color="#023f8a"/><stop offset="1" stop-color="#01357a"/></linearGradient>
<linearGradient id="gDq3" gradientUnits="userSpaceOnUse" x1="237" y1="481" x2="-3.0" y2="721.0"><stop offset="0" stop-color="#2bc5ef"/><stop offset="0.125" stop-color="#27b5e6"/><stop offset="0.25" stop-color="#1d94d4"/><stop offset="0.375" stop-color="#1068b4"/><stop offset="0.54" stop-color="#0a50a0"/><stop offset="0.75" stop-color="#023f8a"/><stop offset="1" stop-color="#01357a"/></linearGradient>
<linearGradient id="gDq4" gradientUnits="userSpaceOnUse" x1="237" y1="481" x2="477.0" y2="721.0"><stop offset="0" stop-color="#2bc5ef"/><stop offset="0.125" stop-color="#27b5e6"/><stop offset="0.25" stop-color="#1d94d4"/><stop offset="0.375" stop-color="#1068b4"/><stop offset="0.54" stop-color="#0a50a0"/><stop offset="0.75" stop-color="#023f8a"/><stop offset="1" stop-color="#01357a"/></linearGradient>
<clipPath id="clipBody"><path d="M470.2,476.6 L470.4,485.9 L470.4,492.9 L470.4,499.2 L470.4,505.2 L470.3,510.8 L470.1,516.2 L469.8,521.5 L469.5,526.5 L469.1,531.4 L468.7,536.1 L468.1,540.7 L467.6,545.1 L466.9,549.4 L466.2,553.6 L465.5,557.6 L464.6,561.5 L463.7,565.3 L462.8,569.1 L461.7,572.9 L460.6,576.7 L459.5,580.3 L458.2,583.9 L457.0,587.4 L455.7,590.9 L454.3,594.3 L452.9,597.6 L451.5,600.9 L450.0,604.1 L448.4,607.2 L446.8,610.3 L445.2,613.4 L443.5,616.3 L441.7,619.3 L439.9,622.1 L438.1,625.0 L436.2,627.7 L434.3,630.5 L432.3,633.1 L430.3,635.7 L428.2,638.3 L426.0,640.8 L423.9,643.3 L421.6,645.7 L419.4,648.1 L417.1,650.4 L414.7,652.7 L412.3,654.9 L409.8,657.1 L407.3,659.2 L404.7,661.3 L402.1,663.4 L399.4,665.4 L396.7,667.3 L393.9,669.2 L391.1,671.1 L388.2,672.9 L385.2,674.7 L382.2,676.4 L379.2,678.1 L376.0,679.7 L372.9,681.3 L369.6,682.8 L366.3,684.3 L363.0,685.7 L359.6,687.1 L356.1,688.5 L352.5,689.8 L348.9,691.0 L345.2,692.2 L341.5,693.4 L337.6,694.4 L333.7,695.5 L329.8,696.5 L325.7,697.4 L321.5,698.3 L317.3,699.1 L313.0,699.9 L308.5,700.6 L304.0,701.3 L299.3,701.9 L294.6,702.5 L289.7,703.0 L284.6,703.4 L279.3,703.8 L273.8,704.1 L268.1,704.4 L262.1,704.6 L255.5,704.8 L248.2,704.9 L238.3,704.9 L228.4,704.9 L221.1,704.8 L214.5,704.6 L208.5,704.4 L202.8,704.1 L197.3,703.8 L192.0,703.4 L186.9,703.0 L182.0,702.5 L177.3,701.9 L172.6,701.3 L168.1,700.6 L163.6,699.9 L159.3,699.1 L155.1,698.3 L150.9,697.4 L146.8,696.5 L142.9,695.5 L139.0,694.4 L135.1,693.4 L131.4,692.2 L127.7,691.0 L124.1,689.8 L120.5,688.5 L117.0,687.1 L113.6,685.7 L110.3,684.3 L107.0,682.8 L103.7,681.3 L100.6,679.7 L97.4,678.1 L94.4,676.4 L91.4,674.7 L88.4,672.9 L85.5,671.1 L82.7,669.2 L79.9,667.3 L77.2,665.4 L74.5,663.4 L71.9,661.3 L69.3,659.2 L66.8,657.1 L64.3,654.9 L61.9,652.7 L59.5,650.4 L57.2,648.1 L55.0,645.7 L52.7,643.3 L50.6,640.8 L48.4,638.3 L46.3,635.7 L44.3,633.1 L42.3,630.5 L40.4,627.7 L38.5,625.0 L36.7,622.1 L34.9,619.3 L33.1,616.3 L31.4,613.4 L29.8,610.3 L28.2,607.2 L26.6,604.1 L25.1,600.9 L23.7,597.6 L22.3,594.3 L20.9,590.9 L19.6,587.4 L18.4,583.9 L17.1,580.3 L16.0,576.7 L14.9,572.9 L13.8,569.1 L12.8,565.2 L11.8,561.0 L10.8,556.8 L9.9,552.4 L9.0,548.0 L8.1,543.4 L7.2,538.8 L6.4,534.0 L5.7,529.1 L4.9,524.1 L4.3,519.0 L3.6,513.7 L3.1,508.2 L2.5,502.6 L2.1,496.7 L1.6,490.4 L1.3,483.7 L1.0,475.1 L0.7,465.8 L0.6,458.9 L0.5,452.9 L0.4,447.3 L0.5,442.1 L0.6,437.1 L0.8,432.4 L1.0,427.8 L1.4,423.4 L1.8,419.1 L2.2,414.9 L2.8,410.8 L3.4,406.8 L4.1,402.9 L4.9,399.0 L5.7,395.2 L6.7,391.4 L7.7,387.5 L8.8,383.7 L10.0,379.9 L11.2,376.2 L12.5,372.6 L13.8,369.0 L15.2,365.4 L16.6,361.9 L18.1,358.5 L19.7,355.1 L21.3,351.8 L22.9,348.6 L24.6,345.4 L26.4,342.2 L28.2,339.1 L30.0,336.0 L31.9,333.0 L33.9,330.1 L35.9,327.2 L37.9,324.3 L40.0,321.5 L42.2,318.7 L44.4,316.0 L46.7,313.4 L49.0,310.8 L51.3,308.2 L53.7,305.7 L56.2,303.2 L58.7,300.8 L61.2,298.4 L63.9,296.1 L66.5,293.9 L69.2,291.6 L72.0,289.5 L74.8,287.3 L77.7,285.3 L80.6,283.2 L83.5,281.3 L86.6,279.3 L89.6,277.4 L92.8,275.6 L95.9,273.8 L99.2,272.1 L102.5,270.4 L105.8,268.8 L109.2,267.2 L112.7,265.7 L116.2,264.2 L119.7,262.8 L123.4,261.4 L127.0,260.1 L130.8,258.9 L134.6,257.7 L138.5,256.5 L142.4,255.4 L146.4,254.4 L150.5,253.4 L154.6,252.4 L158.8,251.6 L163.1,250.7 L167.5,250.0 L171.9,249.3 L176.5,248.6 L181.1,248.0 L185.9,247.5 L190.8,247.1 L195.8,246.6 L201.0,246.3 L206.4,246.0 L212.0,245.8 L218.0,245.6 L224.6,245.5 L232.9,245.5 L241.2,245.5 L247.8,245.6 L253.8,245.8 L259.4,246.0 L264.8,246.3 L270.0,246.6 L275.0,247.1 L279.9,247.5 L284.7,248.0 L289.3,248.6 L293.9,249.3 L298.3,250.0 L302.7,250.7 L307.0,251.6 L311.2,252.4 L315.3,253.4 L319.4,254.4 L323.4,255.4 L327.3,256.5 L331.2,257.7 L335.0,258.9 L338.8,260.1 L342.4,261.4 L346.1,262.8 L349.6,264.2 L353.1,265.7 L356.6,267.2 L360.0,268.8 L363.3,270.4 L366.6,272.1 L369.9,273.8 L373.0,275.6 L376.2,277.4 L379.2,279.3 L382.3,281.3 L385.2,283.2 L388.1,285.3 L391.0,287.3 L393.8,289.5 L396.6,291.6 L399.3,293.9 L401.9,296.1 L404.6,298.4 L407.1,300.8 L409.6,303.2 L412.1,305.7 L414.5,308.2 L416.8,310.8 L419.1,313.4 L421.4,316.0 L423.6,318.7 L425.8,321.5 L427.9,324.3 L429.9,327.2 L431.9,330.1 L433.9,333.0 L435.8,336.0 L437.6,339.1 L439.4,342.2 L441.2,345.4 L442.9,348.6 L444.5,351.8 L446.1,355.1 L447.7,358.5 L449.2,361.9 L450.6,365.4 L452.0,369.0 L453.3,372.6 L454.6,376.2 L455.8,379.9 L457.0,383.7 L458.1,387.5 L459.2,391.5 L460.2,395.7 L461.2,399.8 L462.2,404.0 L463.1,408.3 L464.0,412.6 L464.8,416.9 L465.6,421.3 L466.3,425.8 L466.9,430.4 L467.6,435.1 L468.1,439.9 L468.6,444.9 L469.0,450.1 L469.4,455.6 L469.7,461.5 L470.0,468.0Z"/></clipPath>
  <radialGradient id="gBody" cx="237" cy="481" r="250" gradientUnits="userSpaceOnUse">
   <stop offset="0" stop-color="#2ac4ee"/><stop offset="0.25" stop-color="#22a6dc"/>
   <stop offset="0.6" stop-color="#0c65b0"/><stop offset="0.85" stop-color="#044a94"/><stop offset="1" stop-color="#023f88"/>
  </radialGradient>
  <linearGradient id="gGloss" x1="0" y1="245" x2="0" y2="500" gradientUnits="userSpaceOnUse">
   <stop offset="0" stop-color="#c8d2e0" stop-opacity="0.75"/><stop offset="0.4" stop-color="#b4c8dc" stop-opacity="0.32"/><stop offset="0.9" stop-color="#a8c8e4" stop-opacity="0"/>
  </linearGradient>
  <filter id="blurBig" x="-10%" y="-10%" width="120%" height="120%"><feGaussianBlur stdDeviation="14"/></filter>
  <filter id="blur2" x="-5%" y="-5%" width="110%" height="110%"><feGaussianBlur stdDeviation="1.5"/></filter>
 </defs>
 <path d="M506.8,480.0 L506.9,489.3 L507.0,496.6 L507.0,503.4 L507.0,509.7 L506.8,515.9 L506.6,521.8 L506.4,527.5 L506.0,533.1 L505.6,538.5 L505.1,543.9 L504.5,549.1 L503.8,554.2 L503.1,559.2 L502.3,564.0 L501.3,568.8 L500.4,573.5 L499.3,578.1 L498.1,582.6 L496.9,587.0 L495.6,591.4 L494.3,595.7 L492.8,599.9 L491.3,604.1 L489.8,608.2 L488.2,612.2 L486.5,616.2 L484.8,620.1 L483.0,623.9 L481.1,627.7 L479.1,631.5 L477.2,635.1 L475.1,638.8 L473.0,642.3 L470.8,645.8 L468.5,649.3 L466.2,652.7 L463.9,656.0 L461.4,659.3 L458.9,662.5 L456.4,665.6 L453.8,668.7 L451.1,671.8 L448.3,674.7 L445.5,677.7 L442.7,680.5 L439.8,683.3 L436.8,686.1 L433.8,688.8 L430.7,691.4 L427.5,694.0 L424.3,696.5 L421.0,698.9 L417.7,701.3 L414.3,703.6 L410.8,705.9 L407.3,708.1 L403.7,710.2 L400.1,712.3 L396.4,714.4 L392.7,716.3 L388.9,718.2 L385.0,720.0 L381.1,721.8 L377.1,723.5 L373.0,725.2 L368.9,726.8 L364.7,728.3 L360.5,729.7 L356.2,731.1 L351.8,732.5 L347.4,733.7 L342.9,734.9 L338.3,736.1 L333.6,737.1 L328.9,738.2 L324.1,739.1 L319.2,740.0 L314.2,740.8 L309.1,741.5 L303.9,742.2 L298.6,742.9 L293.1,743.4 L287.5,743.9 L281.8,744.3 L275.8,744.7 L269.6,745.0 L263.1,745.2 L256.2,745.4 L248.5,745.5 L238.3,745.5 L228.1,745.5 L220.4,745.4 L213.5,745.2 L207.0,745.0 L200.8,744.7 L194.8,744.3 L189.1,743.9 L183.5,743.4 L178.0,742.9 L172.7,742.2 L167.5,741.5 L162.4,740.8 L157.4,740.0 L152.5,739.1 L147.7,738.2 L143.0,737.1 L138.3,736.1 L133.7,734.9 L129.2,733.7 L124.8,732.5 L120.4,731.1 L116.1,729.7 L111.9,728.3 L107.7,726.8 L103.6,725.2 L99.5,723.5 L95.5,721.8 L91.6,720.0 L87.7,718.2 L83.9,716.3 L80.2,714.4 L76.5,712.3 L72.9,710.2 L69.3,708.1 L65.8,705.9 L62.3,703.6 L58.9,701.3 L55.6,698.9 L52.3,696.5 L49.1,694.0 L45.9,691.4 L42.8,688.8 L39.8,686.1 L36.8,683.3 L33.9,680.5 L31.1,677.7 L28.3,674.7 L25.5,671.8 L22.8,668.7 L20.2,665.6 L17.7,662.5 L15.2,659.3 L12.7,656.0 L10.4,652.7 L8.1,649.3 L5.8,645.8 L3.6,642.3 L1.5,638.8 L-0.6,635.1 L-2.5,631.5 L-4.5,627.7 L-6.4,623.9 L-8.2,620.1 L-9.9,616.2 L-11.6,612.2 L-13.2,608.2 L-14.7,604.1 L-16.2,599.9 L-17.7,595.7 L-19.0,591.4 L-20.3,587.0 L-21.5,582.6 L-22.7,578.1 L-23.8,573.5 L-24.9,568.8 L-25.9,564.0 L-26.9,559.2 L-27.9,554.2 L-28.8,549.1 L-29.7,543.9 L-30.5,538.5 L-31.3,533.1 L-32.0,527.5 L-32.7,521.8 L-33.4,515.9 L-33.9,509.7 L-34.4,503.4 L-34.9,496.6 L-35.3,489.3 L-35.6,480.0 L-35.9,470.8 L-36.0,463.7 L-36.1,457.3 L-36.2,451.3 L-36.1,445.6 L-36.0,440.0 L-35.8,434.7 L-35.5,429.4 L-35.1,424.3 L-34.6,419.3 L-34.1,414.4 L-33.4,409.6 L-32.7,404.8 L-31.8,400.1 L-30.9,395.4 L-29.9,390.8 L-28.8,386.2 L-27.5,381.7 L-26.2,377.2 L-24.9,372.8 L-23.5,368.5 L-22.0,364.2 L-20.4,360.0 L-18.8,355.8 L-17.1,351.7 L-15.3,347.6 L-13.5,343.6 L-11.6,339.7 L-9.6,335.8 L-7.6,331.9 L-5.5,328.1 L-3.3,324.4 L-1.1,320.7 L1.2,317.1 L3.5,313.6 L6.0,310.1 L8.4,306.6 L11.0,303.2 L13.6,299.9 L16.3,296.6 L19.0,293.4 L21.8,290.3 L24.6,287.2 L27.6,284.1 L30.5,281.1 L33.6,278.2 L36.7,275.3 L39.8,272.5 L43.0,269.8 L46.3,267.1 L49.6,264.5 L53.0,261.9 L56.5,259.4 L60.0,257.0 L63.5,254.6 L67.2,252.3 L70.8,250.0 L74.6,247.9 L78.4,245.7 L82.2,243.7 L86.1,241.7 L90.1,239.8 L94.1,237.9 L98.2,236.1 L102.3,234.4 L106.5,232.7 L110.7,231.1 L115.0,229.5 L119.4,228.1 L123.8,226.7 L128.3,225.3 L132.9,224.1 L137.5,222.9 L142.1,221.7 L146.9,220.7 L151.7,219.7 L156.5,218.7 L161.5,217.9 L166.5,217.1 L171.6,216.4 L176.9,215.7 L182.2,215.1 L187.6,214.6 L193.1,214.1 L198.8,213.8 L204.7,213.5 L210.8,213.2 L217.3,213.0 L224.2,212.9 L232.9,212.9 L241.6,212.9 L248.5,213.0 L255.0,213.2 L261.1,213.5 L267.0,213.8 L272.7,214.1 L278.2,214.6 L283.6,215.1 L288.9,215.7 L294.2,216.4 L299.3,217.1 L304.3,217.9 L309.3,218.7 L314.1,219.7 L318.9,220.7 L323.7,221.7 L328.3,222.9 L332.9,224.1 L337.5,225.3 L342.0,226.7 L346.4,228.1 L350.8,229.5 L355.1,231.1 L359.3,232.7 L363.5,234.4 L367.6,236.1 L371.7,237.9 L375.7,239.8 L379.7,241.7 L383.6,243.7 L387.4,245.7 L391.2,247.9 L395.0,250.0 L398.6,252.3 L402.3,254.6 L405.8,257.0 L409.3,259.4 L412.8,261.9 L416.2,264.5 L419.5,267.1 L422.8,269.8 L426.0,272.5 L429.1,275.3 L432.2,278.2 L435.3,281.1 L438.2,284.1 L441.2,287.2 L444.0,290.3 L446.8,293.4 L449.5,296.6 L452.2,299.9 L454.8,303.2 L457.4,306.6 L459.8,310.1 L462.3,313.6 L464.6,317.1 L466.9,320.7 L469.1,324.4 L471.3,328.1 L473.4,331.9 L475.4,335.8 L477.4,339.7 L479.3,343.6 L481.1,347.6 L482.9,351.7 L484.6,355.8 L486.2,360.0 L487.8,364.2 L489.3,368.5 L490.7,372.8 L492.0,377.2 L493.3,381.7 L494.6,386.2 L495.7,390.8 L496.9,395.4 L497.9,400.1 L499.0,404.8 L499.9,409.6 L500.8,414.4 L501.7,419.3 L502.5,424.3 L503.2,429.4 L503.9,434.7 L504.5,440.0 L505.0,445.6 L505.5,451.3 L505.9,457.3 L506.3,463.7 L506.6,470.8Z" fill="url(#gOuter)"/>
 <g clip-path="url(#clipOuter)"><path d="M493.8,480.2 L494.0,489.5 L494.0,496.7 L494.0,503.3 L494.0,509.5 L493.8,515.5 L493.6,521.2 L493.4,526.8 L493.0,532.2 L492.6,537.4 L492.1,542.5 L491.6,547.5 L490.9,552.4 L490.2,557.1 L489.5,561.7 L488.6,566.3 L487.7,570.7 L486.7,575.0 L485.6,579.2 L484.4,583.4 L483.2,587.6 L481.9,591.6 L480.5,595.6 L479.1,599.6 L477.7,603.4 L476.2,607.2 L474.6,611.0 L472.9,614.7 L471.2,618.3 L469.5,621.9 L467.7,625.4 L465.8,628.8 L463.9,632.2 L461.9,635.6 L459.8,638.8 L457.7,642.1 L455.6,645.2 L453.3,648.3 L451.1,651.4 L448.7,654.4 L446.4,657.3 L443.9,660.2 L441.4,663.1 L438.9,665.9 L436.3,668.6 L433.6,671.3 L430.9,673.9 L428.1,676.4 L425.2,678.9 L422.3,681.4 L419.4,683.8 L416.4,686.1 L413.3,688.4 L410.2,690.7 L407.0,692.8 L403.8,695.0 L400.5,697.0 L397.2,699.0 L393.8,701.0 L390.3,702.9 L386.8,704.7 L383.2,706.5 L379.5,708.2 L375.8,709.9 L372.1,711.5 L368.2,713.1 L364.4,714.6 L360.4,716.0 L356.4,717.4 L352.3,718.7 L348.1,720.0 L343.9,721.2 L339.6,722.3 L335.2,723.4 L330.8,724.4 L326.3,725.4 L321.7,726.3 L317.0,727.2 L312.2,727.9 L307.3,728.7 L302.3,729.3 L297.1,729.9 L291.9,730.5 L286.5,730.9 L280.9,731.4 L275.1,731.7 L269.1,732.0 L262.7,732.2 L255.9,732.4 L248.4,732.5 L238.3,732.5 L228.2,732.5 L220.7,732.4 L213.9,732.2 L207.5,732.0 L201.5,731.7 L195.7,731.4 L190.1,730.9 L184.7,730.5 L179.5,729.9 L174.3,729.3 L169.3,728.7 L164.4,727.9 L159.6,727.2 L154.9,726.3 L150.3,725.4 L145.8,724.4 L141.4,723.4 L137.0,722.3 L132.7,721.2 L128.5,720.0 L124.3,718.7 L120.2,717.4 L116.2,716.0 L112.2,714.6 L108.4,713.1 L104.5,711.5 L100.8,709.9 L97.1,708.2 L93.4,706.5 L89.8,704.7 L86.3,702.9 L82.8,701.0 L79.4,699.0 L76.1,697.0 L72.8,695.0 L69.6,692.8 L66.4,690.7 L63.3,688.4 L60.2,686.1 L57.2,683.8 L54.3,681.4 L51.4,678.9 L48.5,676.4 L45.7,673.9 L43.0,671.3 L40.3,668.6 L37.7,665.9 L35.2,663.1 L32.7,660.2 L30.2,657.3 L27.9,654.4 L25.5,651.4 L23.3,648.3 L21.0,645.2 L18.9,642.1 L16.8,638.8 L14.7,635.6 L12.7,632.2 L10.8,628.8 L8.9,625.4 L7.1,621.9 L5.4,618.3 L3.7,614.7 L2.0,611.0 L0.4,607.2 L-1.1,603.4 L-2.5,599.6 L-3.9,595.6 L-5.3,591.6 L-6.6,587.6 L-7.8,583.4 L-9.0,579.2 L-10.1,574.9 L-11.2,570.5 L-12.2,566.0 L-13.2,561.3 L-14.2,556.6 L-15.1,551.8 L-16.0,546.8 L-16.9,541.8 L-17.7,536.6 L-18.4,531.3 L-19.1,525.9 L-19.8,520.3 L-20.4,514.6 L-21.0,508.6 L-21.5,502.4 L-21.9,495.9 L-22.3,488.7 L-22.6,479.7 L-22.9,470.4 L-23.0,463.5 L-23.1,457.2 L-23.2,451.3 L-23.1,445.8 L-23.0,440.4 L-22.8,435.3 L-22.5,430.3 L-22.2,425.4 L-21.7,420.7 L-21.2,416.0 L-20.6,411.4 L-19.9,406.9 L-19.1,402.5 L-18.2,398.1 L-17.2,393.8 L-16.2,389.5 L-15.0,385.2 L-13.8,380.9 L-12.5,376.8 L-11.1,372.6 L-9.7,368.6 L-8.2,364.6 L-6.7,360.6 L-5.1,356.7 L-3.4,352.9 L-1.7,349.1 L0.1,345.4 L1.9,341.7 L3.8,338.1 L5.8,334.6 L7.9,331.0 L9.9,327.6 L12.1,324.2 L14.3,320.9 L16.6,317.6 L18.9,314.3 L21.3,311.1 L23.7,308.0 L26.3,304.9 L28.8,301.9 L31.4,299.0 L34.1,296.1 L36.8,293.2 L39.6,290.4 L42.5,287.7 L45.4,285.0 L48.4,282.3 L51.4,279.8 L54.4,277.2 L57.6,274.8 L60.8,272.4 L64.0,270.0 L67.3,267.7 L70.7,265.5 L74.1,263.3 L77.5,261.2 L81.0,259.1 L84.6,257.1 L88.2,255.2 L91.9,253.3 L95.7,251.5 L99.5,249.7 L103.3,248.0 L107.2,246.4 L111.2,244.8 L115.2,243.3 L119.3,241.8 L123.5,240.4 L127.7,239.1 L131.9,237.8 L136.2,236.6 L140.6,235.5 L145.1,234.4 L149.6,233.4 L154.2,232.4 L158.9,231.5 L163.6,230.7 L168.5,229.9 L173.4,229.2 L178.4,228.6 L183.5,228.0 L188.7,227.5 L194.1,227.1 L199.6,226.7 L205.3,226.4 L211.3,226.2 L217.5,226.0 L224.4,225.9 L232.9,225.9 L241.4,225.9 L248.3,226.0 L254.5,226.2 L260.5,226.4 L266.2,226.7 L271.7,227.1 L277.1,227.5 L282.3,228.0 L287.4,228.6 L292.4,229.2 L297.3,229.9 L302.2,230.7 L306.9,231.5 L311.6,232.4 L316.2,233.4 L320.7,234.4 L325.2,235.5 L329.6,236.6 L333.9,237.8 L338.1,239.1 L342.3,240.4 L346.5,241.8 L350.6,243.3 L354.6,244.8 L358.6,246.4 L362.5,248.0 L366.3,249.7 L370.1,251.5 L373.9,253.3 L377.6,255.2 L381.2,257.1 L384.8,259.1 L388.3,261.2 L391.7,263.3 L395.1,265.5 L398.5,267.7 L401.8,270.0 L405.0,272.4 L408.2,274.8 L411.4,277.2 L414.4,279.8 L417.4,282.3 L420.4,285.0 L423.3,287.7 L426.2,290.4 L429.0,293.2 L431.7,296.1 L434.4,299.0 L437.0,301.9 L439.5,304.9 L442.1,308.0 L444.5,311.1 L446.9,314.3 L449.2,317.6 L451.5,320.9 L453.7,324.2 L455.9,327.6 L457.9,331.0 L460.0,334.6 L462.0,338.1 L463.9,341.7 L465.7,345.4 L467.5,349.1 L469.2,352.9 L470.9,356.7 L472.5,360.6 L474.0,364.6 L475.5,368.6 L476.9,372.6 L478.3,376.8 L479.6,380.9 L480.8,385.2 L482.0,389.5 L483.1,393.9 L484.2,398.4 L485.2,402.9 L486.2,407.4 L487.2,412.0 L488.0,416.7 L488.9,421.4 L489.6,426.3 L490.3,431.2 L491.0,436.2 L491.6,441.4 L492.1,446.7 L492.6,452.3 L493.0,458.1 L493.3,464.4 L493.6,471.2Z" fill="none" stroke="#606060" stroke-opacity="0.45" stroke-width="8" filter="url(#blur3)"/></g>
 <path d="M493.8,480.2 L494.0,489.5 L494.0,496.7 L494.0,503.3 L494.0,509.5 L493.8,515.5 L493.6,521.2 L493.4,526.8 L493.0,532.2 L492.6,537.4 L492.1,542.5 L491.6,547.5 L490.9,552.4 L490.2,557.1 L489.5,561.7 L488.6,566.3 L487.7,570.7 L486.7,575.0 L485.6,579.2 L484.4,583.4 L483.2,587.6 L481.9,591.6 L480.5,595.6 L479.1,599.6 L477.7,603.4 L476.2,607.2 L474.6,611.0 L472.9,614.7 L471.2,618.3 L469.5,621.9 L467.7,625.4 L465.8,628.8 L463.9,632.2 L461.9,635.6 L459.8,638.8 L457.7,642.1 L455.6,645.2 L453.3,648.3 L451.1,651.4 L448.7,654.4 L446.4,657.3 L443.9,660.2 L441.4,663.1 L438.9,665.9 L436.3,668.6 L433.6,671.3 L430.9,673.9 L428.1,676.4 L425.2,678.9 L422.3,681.4 L419.4,683.8 L416.4,686.1 L413.3,688.4 L410.2,690.7 L407.0,692.8 L403.8,695.0 L400.5,697.0 L397.2,699.0 L393.8,701.0 L390.3,702.9 L386.8,704.7 L383.2,706.5 L379.5,708.2 L375.8,709.9 L372.1,711.5 L368.2,713.1 L364.4,714.6 L360.4,716.0 L356.4,717.4 L352.3,718.7 L348.1,720.0 L343.9,721.2 L339.6,722.3 L335.2,723.4 L330.8,724.4 L326.3,725.4 L321.7,726.3 L317.0,727.2 L312.2,727.9 L307.3,728.7 L302.3,729.3 L297.1,729.9 L291.9,730.5 L286.5,730.9 L280.9,731.4 L275.1,731.7 L269.1,732.0 L262.7,732.2 L255.9,732.4 L248.4,732.5 L238.3,732.5 L228.2,732.5 L220.7,732.4 L213.9,732.2 L207.5,732.0 L201.5,731.7 L195.7,731.4 L190.1,730.9 L184.7,730.5 L179.5,729.9 L174.3,729.3 L169.3,728.7 L164.4,727.9 L159.6,727.2 L154.9,726.3 L150.3,725.4 L145.8,724.4 L141.4,723.4 L137.0,722.3 L132.7,721.2 L128.5,720.0 L124.3,718.7 L120.2,717.4 L116.2,716.0 L112.2,714.6 L108.4,713.1 L104.5,711.5 L100.8,709.9 L97.1,708.2 L93.4,706.5 L89.8,704.7 L86.3,702.9 L82.8,701.0 L79.4,699.0 L76.1,697.0 L72.8,695.0 L69.6,692.8 L66.4,690.7 L63.3,688.4 L60.2,686.1 L57.2,683.8 L54.3,681.4 L51.4,678.9 L48.5,676.4 L45.7,673.9 L43.0,671.3 L40.3,668.6 L37.7,665.9 L35.2,663.1 L32.7,660.2 L30.2,657.3 L27.9,654.4 L25.5,651.4 L23.3,648.3 L21.0,645.2 L18.9,642.1 L16.8,638.8 L14.7,635.6 L12.7,632.2 L10.8,628.8 L8.9,625.4 L7.1,621.9 L5.4,618.3 L3.7,614.7 L2.0,611.0 L0.4,607.2 L-1.1,603.4 L-2.5,599.6 L-3.9,595.6 L-5.3,591.6 L-6.6,587.6 L-7.8,583.4 L-9.0,579.2 L-10.1,574.9 L-11.2,570.5 L-12.2,566.0 L-13.2,561.3 L-14.2,556.6 L-15.1,551.8 L-16.0,546.8 L-16.9,541.8 L-17.7,536.6 L-18.4,531.3 L-19.1,525.9 L-19.8,520.3 L-20.4,514.6 L-21.0,508.6 L-21.5,502.4 L-21.9,495.9 L-22.3,488.7 L-22.6,479.7 L-22.9,470.4 L-23.0,463.5 L-23.1,457.2 L-23.2,451.3 L-23.1,445.8 L-23.0,440.4 L-22.8,435.3 L-22.5,430.3 L-22.2,425.4 L-21.7,420.7 L-21.2,416.0 L-20.6,411.4 L-19.9,406.9 L-19.1,402.5 L-18.2,398.1 L-17.2,393.8 L-16.2,389.5 L-15.0,385.2 L-13.8,380.9 L-12.5,376.8 L-11.1,372.6 L-9.7,368.6 L-8.2,364.6 L-6.7,360.6 L-5.1,356.7 L-3.4,352.9 L-1.7,349.1 L0.1,345.4 L1.9,341.7 L3.8,338.1 L5.8,334.6 L7.9,331.0 L9.9,327.6 L12.1,324.2 L14.3,320.9 L16.6,317.6 L18.9,314.3 L21.3,311.1 L23.7,308.0 L26.3,304.9 L28.8,301.9 L31.4,299.0 L34.1,296.1 L36.8,293.2 L39.6,290.4 L42.5,287.7 L45.4,285.0 L48.4,282.3 L51.4,279.8 L54.4,277.2 L57.6,274.8 L60.8,272.4 L64.0,270.0 L67.3,267.7 L70.7,265.5 L74.1,263.3 L77.5,261.2 L81.0,259.1 L84.6,257.1 L88.2,255.2 L91.9,253.3 L95.7,251.5 L99.5,249.7 L103.3,248.0 L107.2,246.4 L111.2,244.8 L115.2,243.3 L119.3,241.8 L123.5,240.4 L127.7,239.1 L131.9,237.8 L136.2,236.6 L140.6,235.5 L145.1,234.4 L149.6,233.4 L154.2,232.4 L158.9,231.5 L163.6,230.7 L168.5,229.9 L173.4,229.2 L178.4,228.6 L183.5,228.0 L188.7,227.5 L194.1,227.1 L199.6,226.7 L205.3,226.4 L211.3,226.2 L217.5,226.0 L224.4,225.9 L232.9,225.9 L241.4,225.9 L248.3,226.0 L254.5,226.2 L260.5,226.4 L266.2,226.7 L271.7,227.1 L277.1,227.5 L282.3,228.0 L287.4,228.6 L292.4,229.2 L297.3,229.9 L302.2,230.7 L306.9,231.5 L311.6,232.4 L316.2,233.4 L320.7,234.4 L325.2,235.5 L329.6,236.6 L333.9,237.8 L338.1,239.1 L342.3,240.4 L346.5,241.8 L350.6,243.3 L354.6,244.8 L358.6,246.4 L362.5,248.0 L366.3,249.7 L370.1,251.5 L373.9,253.3 L377.6,255.2 L381.2,257.1 L384.8,259.1 L388.3,261.2 L391.7,263.3 L395.1,265.5 L398.5,267.7 L401.8,270.0 L405.0,272.4 L408.2,274.8 L411.4,277.2 L414.4,279.8 L417.4,282.3 L420.4,285.0 L423.3,287.7 L426.2,290.4 L429.0,293.2 L431.7,296.1 L434.4,299.0 L437.0,301.9 L439.5,304.9 L442.1,308.0 L444.5,311.1 L446.9,314.3 L449.2,317.6 L451.5,320.9 L453.7,324.2 L455.9,327.6 L457.9,331.0 L460.0,334.6 L462.0,338.1 L463.9,341.7 L465.7,345.4 L467.5,349.1 L469.2,352.9 L470.9,356.7 L472.5,360.6 L474.0,364.6 L475.5,368.6 L476.9,372.6 L478.3,376.8 L479.6,380.9 L480.8,385.2 L482.0,389.5 L483.1,393.9 L484.2,398.4 L485.2,402.9 L486.2,407.4 L487.2,412.0 L488.0,416.7 L488.9,421.4 L489.6,426.3 L490.3,431.2 L491.0,436.2 L491.6,441.4 L492.1,446.7 L492.6,452.3 L493.0,458.1 L493.3,464.4 L493.6,471.2Z" fill="none" stroke="url(#gLine)" stroke-width="1.6"/>
 <path d="M493.8,480.2 L494.0,489.5 L494.0,496.7 L494.0,503.3 L494.0,509.5 L493.8,515.5 L493.6,521.2 L493.4,526.8 L493.0,532.2 L492.6,537.4 L492.1,542.5 L491.6,547.5 L490.9,552.4 L490.2,557.1 L489.5,561.7 L488.6,566.3 L487.7,570.7 L486.7,575.0 L485.6,579.2 L484.4,583.4 L483.2,587.6 L481.9,591.6 L480.5,595.6 L479.1,599.6 L477.7,603.4 L476.2,607.2 L474.6,611.0 L472.9,614.7 L471.2,618.3 L469.5,621.9 L467.7,625.4 L465.8,628.8 L463.9,632.2 L461.9,635.6 L459.8,638.8 L457.7,642.1 L455.6,645.2 L453.3,648.3 L451.1,651.4 L448.7,654.4 L446.4,657.3 L443.9,660.2 L441.4,663.1 L438.9,665.9 L436.3,668.6 L433.6,671.3 L430.9,673.9 L428.1,676.4 L425.2,678.9 L422.3,681.4 L419.4,683.8 L416.4,686.1 L413.3,688.4 L410.2,690.7 L407.0,692.8 L403.8,695.0 L400.5,697.0 L397.2,699.0 L393.8,701.0 L390.3,702.9 L386.8,704.7 L383.2,706.5 L379.5,708.2 L375.8,709.9 L372.1,711.5 L368.2,713.1 L364.4,714.6 L360.4,716.0 L356.4,717.4 L352.3,718.7 L348.1,720.0 L343.9,721.2 L339.6,722.3 L335.2,723.4 L330.8,724.4 L326.3,725.4 L321.7,726.3 L317.0,727.2 L312.2,727.9 L307.3,728.7 L302.3,729.3 L297.1,729.9 L291.9,730.5 L286.5,730.9 L280.9,731.4 L275.1,731.7 L269.1,732.0 L262.7,732.2 L255.9,732.4 L248.4,732.5 L238.3,732.5 L228.2,732.5 L220.7,732.4 L213.9,732.2 L207.5,732.0 L201.5,731.7 L195.7,731.4 L190.1,730.9 L184.7,730.5 L179.5,729.9 L174.3,729.3 L169.3,728.7 L164.4,727.9 L159.6,727.2 L154.9,726.3 L150.3,725.4 L145.8,724.4 L141.4,723.4 L137.0,722.3 L132.7,721.2 L128.5,720.0 L124.3,718.7 L120.2,717.4 L116.2,716.0 L112.2,714.6 L108.4,713.1 L104.5,711.5 L100.8,709.9 L97.1,708.2 L93.4,706.5 L89.8,704.7 L86.3,702.9 L82.8,701.0 L79.4,699.0 L76.1,697.0 L72.8,695.0 L69.6,692.8 L66.4,690.7 L63.3,688.4 L60.2,686.1 L57.2,683.8 L54.3,681.4 L51.4,678.9 L48.5,676.4 L45.7,673.9 L43.0,671.3 L40.3,668.6 L37.7,665.9 L35.2,663.1 L32.7,660.2 L30.2,657.3 L27.9,654.4 L25.5,651.4 L23.3,648.3 L21.0,645.2 L18.9,642.1 L16.8,638.8 L14.7,635.6 L12.7,632.2 L10.8,628.8 L8.9,625.4 L7.1,621.9 L5.4,618.3 L3.7,614.7 L2.0,611.0 L0.4,607.2 L-1.1,603.4 L-2.5,599.6 L-3.9,595.6 L-5.3,591.6 L-6.6,587.6 L-7.8,583.4 L-9.0,579.2 L-10.1,574.9 L-11.2,570.5 L-12.2,566.0 L-13.2,561.3 L-14.2,556.6 L-15.1,551.8 L-16.0,546.8 L-16.9,541.8 L-17.7,536.6 L-18.4,531.3 L-19.1,525.9 L-19.8,520.3 L-20.4,514.6 L-21.0,508.6 L-21.5,502.4 L-21.9,495.9 L-22.3,488.7 L-22.6,479.7 L-22.9,470.4 L-23.0,463.5 L-23.1,457.2 L-23.2,451.3 L-23.1,445.8 L-23.0,440.4 L-22.8,435.3 L-22.5,430.3 L-22.2,425.4 L-21.7,420.7 L-21.2,416.0 L-20.6,411.4 L-19.9,406.9 L-19.1,402.5 L-18.2,398.1 L-17.2,393.8 L-16.2,389.5 L-15.0,385.2 L-13.8,380.9 L-12.5,376.8 L-11.1,372.6 L-9.7,368.6 L-8.2,364.6 L-6.7,360.6 L-5.1,356.7 L-3.4,352.9 L-1.7,349.1 L0.1,345.4 L1.9,341.7 L3.8,338.1 L5.8,334.6 L7.9,331.0 L9.9,327.6 L12.1,324.2 L14.3,320.9 L16.6,317.6 L18.9,314.3 L21.3,311.1 L23.7,308.0 L26.3,304.9 L28.8,301.9 L31.4,299.0 L34.1,296.1 L36.8,293.2 L39.6,290.4 L42.5,287.7 L45.4,285.0 L48.4,282.3 L51.4,279.8 L54.4,277.2 L57.6,274.8 L60.8,272.4 L64.0,270.0 L67.3,267.7 L70.7,265.5 L74.1,263.3 L77.5,261.2 L81.0,259.1 L84.6,257.1 L88.2,255.2 L91.9,253.3 L95.7,251.5 L99.5,249.7 L103.3,248.0 L107.2,246.4 L111.2,244.8 L115.2,243.3 L119.3,241.8 L123.5,240.4 L127.7,239.1 L131.9,237.8 L136.2,236.6 L140.6,235.5 L145.1,234.4 L149.6,233.4 L154.2,232.4 L158.9,231.5 L163.6,230.7 L168.5,229.9 L173.4,229.2 L178.4,228.6 L183.5,228.0 L188.7,227.5 L194.1,227.1 L199.6,226.7 L205.3,226.4 L211.3,226.2 L217.5,226.0 L224.4,225.9 L232.9,225.9 L241.4,225.9 L248.3,226.0 L254.5,226.2 L260.5,226.4 L266.2,226.7 L271.7,227.1 L277.1,227.5 L282.3,228.0 L287.4,228.6 L292.4,229.2 L297.3,229.9 L302.2,230.7 L306.9,231.5 L311.6,232.4 L316.2,233.4 L320.7,234.4 L325.2,235.5 L329.6,236.6 L333.9,237.8 L338.1,239.1 L342.3,240.4 L346.5,241.8 L350.6,243.3 L354.6,244.8 L358.6,246.4 L362.5,248.0 L366.3,249.7 L370.1,251.5 L373.9,253.3 L377.6,255.2 L381.2,257.1 L384.8,259.1 L388.3,261.2 L391.7,263.3 L395.1,265.5 L398.5,267.7 L401.8,270.0 L405.0,272.4 L408.2,274.8 L411.4,277.2 L414.4,279.8 L417.4,282.3 L420.4,285.0 L423.3,287.7 L426.2,290.4 L429.0,293.2 L431.7,296.1 L434.4,299.0 L437.0,301.9 L439.5,304.9 L442.1,308.0 L444.5,311.1 L446.9,314.3 L449.2,317.6 L451.5,320.9 L453.7,324.2 L455.9,327.6 L457.9,331.0 L460.0,334.6 L462.0,338.1 L463.9,341.7 L465.7,345.4 L467.5,349.1 L469.2,352.9 L470.9,356.7 L472.5,360.6 L474.0,364.6 L475.5,368.6 L476.9,372.6 L478.3,376.8 L479.6,380.9 L480.8,385.2 L482.0,389.5 L483.1,393.9 L484.2,398.4 L485.2,402.9 L486.2,407.4 L487.2,412.0 L488.0,416.7 L488.9,421.4 L489.6,426.3 L490.3,431.2 L491.0,436.2 L491.6,441.4 L492.1,446.7 L492.6,452.3 L493.0,458.1 L493.3,464.4 L493.6,471.2Z" fill="url(#gRing)"/>
 <g clip-path="url(#clipR2)"><path d="M478.3,480.4 L478.5,489.7 L478.5,496.8 L478.5,503.3 L478.5,509.3 L478.4,515.1 L478.2,520.6 L477.9,525.9 L477.6,531.1 L477.2,536.1 L476.7,540.9 L476.2,545.6 L475.6,550.2 L474.9,554.7 L474.2,559.0 L473.4,563.2 L472.5,567.3 L471.6,571.3 L470.6,575.2 L469.5,579.2 L468.4,583.0 L467.2,586.8 L465.9,590.6 L464.6,594.2 L463.2,597.8 L461.8,601.4 L460.4,604.8 L458.8,608.2 L457.3,611.6 L455.6,614.9 L454.0,618.1 L452.2,621.3 L450.5,624.4 L448.6,627.5 L446.8,630.5 L444.8,633.5 L442.8,636.4 L440.8,639.2 L438.7,642.0 L436.6,644.8 L434.4,647.5 L432.2,650.1 L429.9,652.7 L427.6,655.3 L425.2,657.7 L422.7,660.2 L420.2,662.6 L417.7,664.9 L415.1,667.2 L412.4,669.5 L409.7,671.7 L407.0,673.8 L404.2,675.9 L401.3,678.0 L398.4,680.0 L395.4,681.9 L392.4,683.8 L389.3,685.7 L386.2,687.5 L383.0,689.2 L379.7,690.9 L376.4,692.6 L373.0,694.2 L369.6,695.7 L366.1,697.2 L362.5,698.7 L358.9,700.1 L355.2,701.4 L351.5,702.7 L347.7,703.9 L343.8,705.1 L339.8,706.3 L335.8,707.3 L331.6,708.3 L327.4,709.3 L323.2,710.2 L318.8,711.1 L314.3,711.9 L309.8,712.6 L305.1,713.3 L300.3,713.9 L295.5,714.5 L290.4,715.0 L285.2,715.5 L279.9,715.9 L274.3,716.2 L268.5,716.5 L262.3,716.7 L255.7,716.9 L248.3,717.0 L238.3,717.0 L228.3,717.0 L220.9,716.9 L214.3,716.7 L208.1,716.5 L202.3,716.2 L196.7,715.9 L191.4,715.5 L186.2,715.0 L181.1,714.5 L176.3,713.9 L171.5,713.3 L166.8,712.6 L162.3,711.9 L157.8,711.1 L153.4,710.2 L149.2,709.3 L145.0,708.3 L140.8,707.3 L136.8,706.3 L132.8,705.1 L128.9,703.9 L125.1,702.7 L121.4,701.4 L117.7,700.1 L114.1,698.7 L110.5,697.2 L107.0,695.7 L103.6,694.2 L100.2,692.6 L96.9,690.9 L93.6,689.2 L90.4,687.5 L87.3,685.7 L84.2,683.8 L81.2,681.9 L78.2,680.0 L75.3,678.0 L72.4,675.9 L69.6,673.8 L66.9,671.7 L64.2,669.5 L61.5,667.2 L58.9,664.9 L56.4,662.6 L53.9,660.2 L51.4,657.7 L49.0,655.3 L46.7,652.7 L44.4,650.1 L42.2,647.5 L40.0,644.8 L37.9,642.0 L35.8,639.2 L33.8,636.4 L31.8,633.5 L29.8,630.5 L28.0,627.5 L26.1,624.4 L24.4,621.3 L22.6,618.1 L21.0,614.9 L19.3,611.6 L17.8,608.2 L16.2,604.8 L14.8,601.4 L13.4,597.8 L12.0,594.2 L10.7,590.6 L9.4,586.8 L8.2,583.0 L7.1,579.2 L6.0,575.2 L5.0,571.1 L3.9,566.9 L2.9,562.6 L1.9,558.1 L1.0,553.6 L0.1,548.9 L-0.7,544.2 L-1.6,539.3 L-2.3,534.3 L-3.1,529.2 L-3.8,524.0 L-4.4,518.6 L-5.0,513.0 L-5.5,507.3 L-6.0,501.3 L-6.4,494.9 L-6.8,488.0 L-7.1,479.3 L-7.4,470.0 L-7.5,463.1 L-7.6,457.0 L-7.7,451.3 L-7.6,446.0 L-7.5,440.9 L-7.3,436.0 L-7.1,431.3 L-6.7,426.7 L-6.3,422.3 L-5.8,417.9 L-5.2,413.7 L-4.6,409.5 L-3.8,405.4 L-3.0,401.3 L-2.1,397.3 L-1.2,393.3 L-0.1,389.4 L1.1,385.4 L2.3,381.5 L3.5,377.6 L4.9,373.8 L6.2,370.1 L7.7,366.4 L9.2,362.8 L10.7,359.2 L12.3,355.7 L14.0,352.2 L15.7,348.8 L17.5,345.5 L19.3,342.2 L21.2,339.0 L23.1,335.8 L25.1,332.6 L27.2,329.5 L29.3,326.5 L31.4,323.5 L33.6,320.6 L35.9,317.7 L38.2,314.9 L40.5,312.1 L42.9,309.3 L45.4,306.7 L47.9,304.0 L50.5,301.5 L53.1,298.9 L55.8,296.4 L58.5,294.0 L61.3,291.6 L64.2,289.3 L67.0,287.1 L70.0,284.8 L73.0,282.7 L76.0,280.5 L79.1,278.5 L82.3,276.5 L85.5,274.5 L88.7,272.6 L92.1,270.7 L95.4,268.9 L98.8,267.2 L102.3,265.5 L105.9,263.8 L109.5,262.3 L113.1,260.7 L116.8,259.3 L120.6,257.8 L124.4,256.5 L128.3,255.2 L132.2,253.9 L136.2,252.7 L140.3,251.6 L144.4,250.5 L148.6,249.5 L152.9,248.5 L157.2,247.6 L161.7,246.8 L166.2,246.0 L170.7,245.3 L175.4,244.6 L180.2,244.0 L185.1,243.5 L190.1,243.0 L195.2,242.6 L200.5,242.2 L206.0,241.9 L211.8,241.7 L217.9,241.5 L224.5,241.4 L232.9,241.4 L241.3,241.4 L247.9,241.5 L254.0,241.7 L259.8,241.9 L265.3,242.2 L270.6,242.6 L275.7,243.0 L280.7,243.5 L285.6,244.0 L290.4,244.6 L295.1,245.3 L299.6,246.0 L304.1,246.8 L308.6,247.6 L312.9,248.5 L317.2,249.5 L321.4,250.5 L325.5,251.6 L329.6,252.7 L333.6,253.9 L337.5,255.2 L341.4,256.5 L345.2,257.8 L349.0,259.3 L352.7,260.7 L356.3,262.3 L359.9,263.8 L363.5,265.5 L367.0,267.2 L370.4,268.9 L373.7,270.7 L377.1,272.6 L380.3,274.5 L383.5,276.5 L386.7,278.5 L389.8,280.5 L392.8,282.7 L395.8,284.8 L398.8,287.1 L401.6,289.3 L404.5,291.6 L407.3,294.0 L410.0,296.4 L412.7,298.9 L415.3,301.5 L417.9,304.0 L420.4,306.7 L422.9,309.3 L425.3,312.1 L427.6,314.9 L429.9,317.7 L432.2,320.6 L434.4,323.5 L436.5,326.5 L438.6,329.5 L440.7,332.6 L442.7,335.8 L444.6,339.0 L446.5,342.2 L448.3,345.5 L450.1,348.8 L451.8,352.2 L453.5,355.7 L455.1,359.2 L456.6,362.8 L458.1,366.4 L459.6,370.1 L460.9,373.8 L462.3,377.6 L463.5,381.5 L464.7,385.4 L465.9,389.4 L467.0,393.5 L468.1,397.7 L469.1,402.0 L470.1,406.3 L471.1,410.6 L471.9,415.0 L472.8,419.5 L473.6,424.0 L474.3,428.6 L475.0,433.3 L475.6,438.1 L476.2,443.0 L476.7,448.2 L477.1,453.5 L477.5,459.1 L477.8,465.1 L478.1,471.8Z" fill="none" stroke="#050505" stroke-width="11" filter="url(#blur3)"/></g>
 <path d="M478.3,480.4 L478.5,489.7 L478.5,496.8 L478.5,503.3 L478.5,509.3 L478.4,515.1 L478.2,520.6 L477.9,525.9 L477.6,531.1 L477.2,536.1 L476.7,540.9 L476.2,545.6 L475.6,550.2 L474.9,554.7 L474.2,559.0 L473.4,563.2 L472.5,567.3 L471.6,571.3 L470.6,575.2 L469.5,579.2 L468.4,583.0 L467.2,586.8 L465.9,590.6 L464.6,594.2 L463.2,597.8 L461.8,601.4 L460.4,604.8 L458.8,608.2 L457.3,611.6 L455.6,614.9 L454.0,618.1 L452.2,621.3 L450.5,624.4 L448.6,627.5 L446.8,630.5 L444.8,633.5 L442.8,636.4 L440.8,639.2 L438.7,642.0 L436.6,644.8 L434.4,647.5 L432.2,650.1 L429.9,652.7 L427.6,655.3 L425.2,657.7 L422.7,660.2 L420.2,662.6 L417.7,664.9 L415.1,667.2 L412.4,669.5 L409.7,671.7 L407.0,673.8 L404.2,675.9 L401.3,678.0 L398.4,680.0 L395.4,681.9 L392.4,683.8 L389.3,685.7 L386.2,687.5 L383.0,689.2 L379.7,690.9 L376.4,692.6 L373.0,694.2 L369.6,695.7 L366.1,697.2 L362.5,698.7 L358.9,700.1 L355.2,701.4 L351.5,702.7 L347.7,703.9 L343.8,705.1 L339.8,706.3 L335.8,707.3 L331.6,708.3 L327.4,709.3 L323.2,710.2 L318.8,711.1 L314.3,711.9 L309.8,712.6 L305.1,713.3 L300.3,713.9 L295.5,714.5 L290.4,715.0 L285.2,715.5 L279.9,715.9 L274.3,716.2 L268.5,716.5 L262.3,716.7 L255.7,716.9 L248.3,717.0 L238.3,717.0 L228.3,717.0 L220.9,716.9 L214.3,716.7 L208.1,716.5 L202.3,716.2 L196.7,715.9 L191.4,715.5 L186.2,715.0 L181.1,714.5 L176.3,713.9 L171.5,713.3 L166.8,712.6 L162.3,711.9 L157.8,711.1 L153.4,710.2 L149.2,709.3 L145.0,708.3 L140.8,707.3 L136.8,706.3 L132.8,705.1 L128.9,703.9 L125.1,702.7 L121.4,701.4 L117.7,700.1 L114.1,698.7 L110.5,697.2 L107.0,695.7 L103.6,694.2 L100.2,692.6 L96.9,690.9 L93.6,689.2 L90.4,687.5 L87.3,685.7 L84.2,683.8 L81.2,681.9 L78.2,680.0 L75.3,678.0 L72.4,675.9 L69.6,673.8 L66.9,671.7 L64.2,669.5 L61.5,667.2 L58.9,664.9 L56.4,662.6 L53.9,660.2 L51.4,657.7 L49.0,655.3 L46.7,652.7 L44.4,650.1 L42.2,647.5 L40.0,644.8 L37.9,642.0 L35.8,639.2 L33.8,636.4 L31.8,633.5 L29.8,630.5 L28.0,627.5 L26.1,624.4 L24.4,621.3 L22.6,618.1 L21.0,614.9 L19.3,611.6 L17.8,608.2 L16.2,604.8 L14.8,601.4 L13.4,597.8 L12.0,594.2 L10.7,590.6 L9.4,586.8 L8.2,583.0 L7.1,579.2 L6.0,575.2 L5.0,571.1 L3.9,566.9 L2.9,562.6 L1.9,558.1 L1.0,553.6 L0.1,548.9 L-0.7,544.2 L-1.6,539.3 L-2.3,534.3 L-3.1,529.2 L-3.8,524.0 L-4.4,518.6 L-5.0,513.0 L-5.5,507.3 L-6.0,501.3 L-6.4,494.9 L-6.8,488.0 L-7.1,479.3 L-7.4,470.0 L-7.5,463.1 L-7.6,457.0 L-7.7,451.3 L-7.6,446.0 L-7.5,440.9 L-7.3,436.0 L-7.1,431.3 L-6.7,426.7 L-6.3,422.3 L-5.8,417.9 L-5.2,413.7 L-4.6,409.5 L-3.8,405.4 L-3.0,401.3 L-2.1,397.3 L-1.2,393.3 L-0.1,389.4 L1.1,385.4 L2.3,381.5 L3.5,377.6 L4.9,373.8 L6.2,370.1 L7.7,366.4 L9.2,362.8 L10.7,359.2 L12.3,355.7 L14.0,352.2 L15.7,348.8 L17.5,345.5 L19.3,342.2 L21.2,339.0 L23.1,335.8 L25.1,332.6 L27.2,329.5 L29.3,326.5 L31.4,323.5 L33.6,320.6 L35.9,317.7 L38.2,314.9 L40.5,312.1 L42.9,309.3 L45.4,306.7 L47.9,304.0 L50.5,301.5 L53.1,298.9 L55.8,296.4 L58.5,294.0 L61.3,291.6 L64.2,289.3 L67.0,287.1 L70.0,284.8 L73.0,282.7 L76.0,280.5 L79.1,278.5 L82.3,276.5 L85.5,274.5 L88.7,272.6 L92.1,270.7 L95.4,268.9 L98.8,267.2 L102.3,265.5 L105.9,263.8 L109.5,262.3 L113.1,260.7 L116.8,259.3 L120.6,257.8 L124.4,256.5 L128.3,255.2 L132.2,253.9 L136.2,252.7 L140.3,251.6 L144.4,250.5 L148.6,249.5 L152.9,248.5 L157.2,247.6 L161.7,246.8 L166.2,246.0 L170.7,245.3 L175.4,244.6 L180.2,244.0 L185.1,243.5 L190.1,243.0 L195.2,242.6 L200.5,242.2 L206.0,241.9 L211.8,241.7 L217.9,241.5 L224.5,241.4 L232.9,241.4 L241.3,241.4 L247.9,241.5 L254.0,241.7 L259.8,241.9 L265.3,242.2 L270.6,242.6 L275.7,243.0 L280.7,243.5 L285.6,244.0 L290.4,244.6 L295.1,245.3 L299.6,246.0 L304.1,246.8 L308.6,247.6 L312.9,248.5 L317.2,249.5 L321.4,250.5 L325.5,251.6 L329.6,252.7 L333.6,253.9 L337.5,255.2 L341.4,256.5 L345.2,257.8 L349.0,259.3 L352.7,260.7 L356.3,262.3 L359.9,263.8 L363.5,265.5 L367.0,267.2 L370.4,268.9 L373.7,270.7 L377.1,272.6 L380.3,274.5 L383.5,276.5 L386.7,278.5 L389.8,280.5 L392.8,282.7 L395.8,284.8 L398.8,287.1 L401.6,289.3 L404.5,291.6 L407.3,294.0 L410.0,296.4 L412.7,298.9 L415.3,301.5 L417.9,304.0 L420.4,306.7 L422.9,309.3 L425.3,312.1 L427.6,314.9 L429.9,317.7 L432.2,320.6 L434.4,323.5 L436.5,326.5 L438.6,329.5 L440.7,332.6 L442.7,335.8 L444.6,339.0 L446.5,342.2 L448.3,345.5 L450.1,348.8 L451.8,352.2 L453.5,355.7 L455.1,359.2 L456.6,362.8 L458.1,366.4 L459.6,370.1 L460.9,373.8 L462.3,377.6 L463.5,381.5 L464.7,385.4 L465.9,389.4 L467.0,393.5 L468.1,397.7 L469.1,402.0 L470.1,406.3 L471.1,410.6 L471.9,415.0 L472.8,419.5 L473.6,424.0 L474.3,428.6 L475.0,433.3 L475.6,438.1 L476.2,443.0 L476.7,448.2 L477.1,453.5 L477.5,459.1 L477.8,465.1 L478.1,471.8Z" fill="url(#gBand)"/>
 <g filter="url(#blur2)"><g clip-path="url(#clipBody)">
  <rect x="-100" y="0" width="700" height="900" fill="url(#gBody)"/>
  <g opacity="0.55" filter="url(#blurBig)">
  <rect x="237" y="0" width="600" height="481" fill="url(#gDq1)"/>
  <rect x="-100" y="0" width="337" height="481" fill="url(#gDq2)"/>
  <rect x="-100" y="481" width="337" height="600" fill="url(#gDq3)"/>
  <rect x="237" y="481" width="600" height="600" fill="url(#gDq4)"/>
 </g></g></g>
 <g clip-path="url(#clipBodyIn)"><path d="M451.8,100 L451.8,400.0 L451.8,403.7 L451.8,405.9 L451.8,407.7 L451.7,409.3 L451.7,410.8 L451.6,412.2 L451.5,413.5 L451.4,414.7 L451.4,415.9 L451.3,417.1 L451.1,418.2 L451.0,419.3 L450.9,420.4 L450.7,421.4 L450.6,422.4 L450.4,423.4 L450.2,424.3 L450.0,425.3 L449.8,426.2 L449.6,427.1 L449.4,428.0 L449.1,428.8 L448.9,429.7 L448.6,430.5 L448.4,431.4 L448.1,432.2 L447.8,433.0 L447.5,433.8 L447.2,434.6 L446.9,435.3 L446.5,436.1 L446.2,436.8 L445.8,437.6 L445.5,438.3 L445.1,439.0 L444.7,439.8 L444.3,440.5 L443.9,441.2 L443.5,441.9 L443.0,442.5 L442.6,443.2 L442.1,443.9 L441.7,444.6 L441.2,445.2 L440.7,445.9 L440.2,446.5 L439.7,447.1 L439.2,447.8 L438.6,448.4 L438.1,449.0 L437.5,449.6 L437.0,450.2 L436.4,450.8 L435.8,451.4 L435.2,452.0 L434.6,452.6 L434.0,453.1 L433.3,453.7 L432.7,454.3 L432.0,454.8 L431.4,455.4 L430.7,455.9 L430.0,456.4 L429.3,457.0 L428.6,457.5 L427.9,458.0 L427.2,458.5 L426.4,459.1 L425.7,459.6 L424.9,460.1 L424.1,460.6 L423.3,461.0 L422.5,461.5 L421.7,462.0 L420.9,462.5 L420.1,463.0 L419.2,463.4 L418.4,463.9 L417.5,464.3 L416.6,464.8 L415.7,465.2 L414.8,465.7 L413.9,466.1 L413.0,466.6 L412.1,467.0 L411.1,467.4 L410.2,467.8 L409.2,468.2 L408.2,468.6 L407.2,469.1 L406.2,469.5 L405.2,469.8 L404.2,470.2 L403.2,470.6 L402.1,471.0 L401.0,471.4 L400.0,471.8 L398.9,472.1 L397.8,472.5 L396.7,472.8 L395.6,473.2 L394.4,473.5 L393.3,473.9 L392.1,474.2 L391.0,474.6 L389.8,474.9 L388.6,475.2 L387.4,475.5 L386.1,475.9 L384.9,476.2 L383.7,476.5 L382.4,476.8 L381.1,477.1 L379.9,477.4 L378.6,477.7 L377.2,477.9 L375.9,478.2 L374.6,478.5 L373.2,478.8 L371.9,479.0 L370.5,479.3 L369.1,479.6 L367.7,479.8 L366.3,480.1 L364.8,480.3 L363.4,480.6 L361.9,480.8 L360.4,481.0 L359.0,481.3 L357.4,481.5 L355.9,481.7 L354.4,481.9 L352.8,482.1 L351.2,482.3 L349.7,482.5 L348.0,482.7 L346.4,482.9 L344.8,483.1 L343.1,483.3 L341.4,483.5 L339.7,483.6 L338.0,483.8 L336.3,484.0 L334.5,484.1 L332.8,484.3 L331.0,484.4 L329.1,484.6 L327.3,484.7 L325.4,484.9 L323.5,485.0 L321.6,485.1 L319.7,485.3 L317.7,485.4 L315.7,485.5 L313.7,485.6 L311.6,485.7 L309.5,485.8 L307.4,485.9 L305.2,486.0 L303.0,486.1 L300.8,486.2 L298.5,486.3 L296.2,486.4 L293.8,486.4 L291.4,486.5 L288.9,486.6 L286.3,486.6 L283.7,486.7 L281.0,486.7 L278.3,486.8 L275.4,486.8 L272.4,486.9 L269.3,486.9 L266.0,486.9 L262.6,486.9 L258.9,487.0 L254.8,487.0 L250.3,487.0 L245.0,487.0 L235.8,487.0 L226.6,487.0 L221.3,487.0 L216.8,487.0 L212.7,487.0 L209.0,486.9 L205.6,486.9 L202.3,486.9 L199.2,486.9 L196.2,486.8 L193.3,486.8 L190.6,486.7 L187.9,486.7 L185.3,486.6 L182.7,486.6 L180.2,486.5 L177.8,486.4 L175.4,486.4 L173.1,486.3 L170.8,486.2 L168.6,486.1 L166.4,486.0 L164.2,485.9 L162.1,485.8 L160.0,485.7 L157.9,485.6 L155.9,485.5 L153.9,485.4 L151.9,485.3 L150.0,485.1 L148.1,485.0 L146.2,484.9 L144.3,484.7 L142.5,484.6 L140.6,484.4 L138.8,484.3 L137.1,484.1 L135.3,484.0 L133.6,483.8 L131.9,483.6 L130.2,483.5 L128.5,483.3 L126.8,483.1 L125.2,482.9 L123.6,482.7 L121.9,482.5 L120.4,482.3 L118.8,482.1 L117.2,481.9 L115.7,481.7 L114.2,481.5 L112.6,481.3 L111.2,481.0 L109.7,480.8 L108.2,480.6 L106.8,480.3 L105.3,480.1 L103.9,479.8 L102.5,479.6 L101.1,479.3 L99.7,479.0 L98.4,478.8 L97.0,478.5 L95.7,478.2 L94.4,477.9 L93.0,477.7 L91.7,477.4 L90.5,477.1 L89.2,476.8 L87.9,476.5 L86.7,476.2 L85.5,475.9 L84.2,475.5 L83.0,475.2 L81.8,474.9 L80.6,474.6 L79.5,474.2 L78.3,473.9 L77.2,473.5 L76.0,473.2 L74.9,472.8 L73.8,472.5 L72.7,472.1 L71.6,471.8 L70.6,471.4 L69.5,471.0 L68.4,470.6 L67.4,470.2 L66.4,469.8 L65.4,469.5 L64.4,469.1 L63.4,468.6 L62.4,468.2 L61.4,467.8 L60.5,467.4 L59.5,467.0 L58.6,466.6 L57.7,466.1 L56.8,465.7 L55.9,465.2 L55.0,464.8 L54.1,464.3 L53.2,463.9 L52.4,463.4 L51.5,463.0 L50.7,462.5 L49.9,462.0 L49.1,461.5 L48.3,461.0 L47.5,460.6 L46.7,460.1 L45.9,459.6 L45.2,459.1 L44.4,458.5 L43.7,458.0 L43.0,457.5 L42.3,457.0 L41.6,456.4 L40.9,455.9 L40.2,455.4 L39.6,454.8 L38.9,454.3 L38.3,453.7 L37.6,453.1 L37.0,452.6 L36.4,452.0 L35.8,451.4 L35.2,450.8 L34.6,450.2 L34.1,449.6 L33.5,449.0 L33.0,448.4 L32.4,447.8 L31.9,447.1 L31.4,446.5 L30.9,445.9 L30.4,445.2 L29.9,444.6 L29.5,443.9 L29.0,443.2 L28.6,442.5 L28.1,441.9 L27.7,441.2 L27.3,440.5 L26.9,439.8 L26.5,439.0 L26.1,438.3 L25.8,437.6 L25.4,436.8 L25.1,436.1 L24.7,435.3 L24.4,434.6 L24.1,433.8 L23.8,433.0 L23.5,432.2 L23.2,431.4 L23.0,430.5 L22.7,429.7 L22.5,428.8 L22.2,428.0 L22.0,427.1 L21.8,426.2 L21.6,425.3 L21.4,424.3 L21.2,423.4 L21.0,422.4 L20.9,421.4 L20.7,420.4 L20.6,419.3 L20.5,418.2 L20.3,417.1 L20.2,415.9 L20.2,414.7 L20.1,413.5 L20.0,412.2 L19.9,410.8 L19.9,409.3 L19.8,407.7 L19.8,405.9 L19.8,403.7 L19.8,100 Z" fill="url(#gGloss)"/></g>
</svg>
<div class="abs" style="left:892px;top:33px;width:1px;height:862px;background:#b4b4b4"></div><div class="abs" style="left:893px;top:33px;width:2px;height:862px;background:#f4f4f4"></div>
<div class="abs gv"></div>
<div class="abs gh"></div>
<div id="dlg" class="abs">
 <div id="title" class="abs"><span>图层样式</span></div>
 <div class="abs" style="left:0;top:29px;width:3px;height:472px;background:linear-gradient(90deg,#0838c8,#2470fa 50%,#0a54e8)"></div>
 <div class="abs" style="left:0;top:498px;width:440px;height:3px;background:linear-gradient(#1a64f4,#0844d0 50%,#00228a)"></div>
 <div id="content" class="abs">
  <div id="list" class="abs">
   <div class="row" style="top:0;height:22px;border-bottom:3px double #111;padding-left:4px">样式</div>
   <div class="row" style="top:25px;height:22px;border-bottom:1px solid #111;padding-left:4px">混合选项:自定</div>
   <div class="row" style="top:47px;"><div class="cb" style="left:5px"></div><span style="position:absolute;left:19px;top:-1px">投影</span></div><div class="row" style="top:69px;"><div class="cb" style="left:5px"></div><span style="position:absolute;left:19px;top:-1px">内阴影</span></div><div class="row" style="top:91px;"><div class="cb" style="left:5px"></div><span style="position:absolute;left:19px;top:-1px">外发光</span></div><div class="row" style="top:113px;"><div class="cb" style="left:5px"></div><span style="position:absolute;left:19px;top:-1px">内发光</span></div><div class="row" style="top:135px;"><div class="cb" style="left:5px"></div><span style="position:absolute;left:19px;top:-1px">斜面和浮雕</span></div><div class="row" style="top:157px;"><div class="cb" style="left:19px"></div><span style="position:absolute;left:33px;top:-1px">等高线</span></div><div class="row" style="top:179px;"><div class="cb" style="left:19px"></div><span style="position:absolute;left:33px;top:-1px">纹理</span></div><div class="row" style="top:201px;"><div class="cb" style="left:5px"></div><span style="position:absolute;left:19px;top:-1px">光泽</span></div><div class="row" style="top:223px;"><div class="cb" style="left:5px"></div><span style="position:absolute;left:19px;top:-1px">颜色叠加</span></div><div class="row" style="top:245px;background:#316ac5;color:#fff;"><div class="cb" style="left:5px"><svg width="9" height="9" style="position:absolute;left:0;top:0"><path d="M1.5,4 L3.5,6.5 L7.5,2" fill="none" stroke="#21a121" stroke-width="2"/></svg></div><span style="position:absolute;left:19px;top:-1px">渐变叠加</span></div><div class="row" style="top:267px;"><div class="cb" style="left:5px"></div><span style="position:absolute;left:19px;top:-1px">图案叠加</span></div><div class="row" style="top:289px;"><div class="cb" style="left:5px"></div><span style="position:absolute;left:19px;top:-1px">描边</span></div>
  </div>
 </div>
</div>
<div class="pgrp" style="left:605px;top:177px;width:300px;height:441px"></div>
<div class="pgl" style="left:621px;top:170px">渐变叠加</div>
<div class="pgrp" style="left:615px;top:196px;width:290px;height:178px"></div>
<div class="pgl" style="left:631px;top:189px">渐变</div>
<div class="plab" style="right:197px;top:217px;">混合模式(O):</div>
<div class="pcombo" style="left:704px;top:212px;width:123px;height:22px;line-height:20px">滤色<div class="pdd" style="left:105px;top:1px;width:16px;height:18px"><div style="position:absolute;left:0px;top:0px;width:15px;height:18px"><svg width="9" height="6" viewBox="0 0 9 6" style="position:absolute;left:3px;top:6px"><path d="M0.8,0.8 L4.5,4.5 L8.2,0.8" fill="none" stroke="#4d6185" stroke-width="2"/></svg></div></div></div>
<div class="plab" style="right:197px;top:238px;">不透明度(P):</div>
<div class="ptrack" style="left:708px;top:244px;width:98px"></div><div style="position:absolute;left:762px;top:239px;width:11px;height:12px"><svg width="11" height="12" viewBox="0 0 11 12"><path d="M0.5,11.5 L0.5,5 L5.5,0.5 L10.5,5 L10.5,11.5 Z" fill="#f4f4f0" stroke="#8aa08a" stroke-width="1"/><path d="M1,10.5 L10,10.5" stroke="#21a121" stroke-width="2"/></svg></div>
<div class="pinp" style="left:815px;top:236px;width:38px;height:19px;line-height:17px">60</div>
<div class="plab" style="left:855px;top:239px;">%</div>
<div class="plab" style="right:199px;top:261px;">渐变:</div>
<div class="abs" style="left:704px;top:259px;width:123px;height:18px;border:1px solid #000;background:#fff;padding:1px"><div class="abs" style="left:1px;top:1px;width:110px;height:14px;background:linear-gradient(90deg,#000 0,#111 8%,#fff 100%);border:1px solid #000;border-right:none"></div><div class="abs" style="left:110px;top:0;width:1px;height:16px;background:#000"></div><div class="abs" style="left:111px;top:1px;width:10px;height:14px;background:linear-gradient(#fff,#f2f2f2)"><svg width="10" height="14" style="position:absolute;left:0;top:0"><path d="M2,5.5 L8,5.5 L5,9 Z" fill="#000"/></svg></div></div>
<div class="pcb" style="left:836px;top:261px"></div>
<div class="plab" style="left:852px;top:261px;">反向(R)</div>
<div class="plab" style="right:197px;top:285px;">样式(L):</div>
<div class="pcombo" style="left:704px;top:280px;width:63px;height:23px;line-height:21px">线性<div class="pdd" style="left:45px;top:1px;width:16px;height:19px"><div style="position:absolute;left:0px;top:0px;width:15px;height:18px"><svg width="9" height="6" viewBox="0 0 9 6" style="position:absolute;left:3px;top:6px"><path d="M0.8,0.8 L4.5,4.5 L8.2,0.8" fill="none" stroke="#4d6185" stroke-width="2"/></svg></div></div></div>
<div class="pcb" style="left:775px;top:285px"><svg width="11" height="11" style="position:absolute;left:0;top:0"><path d="M2,5 L4.3,7.5 L9,2.5" fill="none" stroke="#21a121" stroke-width="2.2"/></svg></div>
<div class="plab" style="left:790px;top:284px;">与图层对齐(I)</div>
<div class="plab" style="right:197px;top:317px;">角度(N):</div>
<svg class="abs" style="left:703px;top:305px" width="38" height="38"><defs><radialGradient id="dialg" cx="0.45" cy="0.4" r="0.6"><stop offset="0" stop-color="#f8f8f6"/><stop offset="1" stop-color="#e4e4e0"/></radialGradient></defs><circle cx="19" cy="19" r="17.2" fill="url(#dialg)" stroke="#5b6a92" stroke-width="2"/><path d="M19.2,1.5 L19.2,19" stroke="#000" stroke-width="1.2"/><rect x="17.7" y="17.8" width="3" height="3" fill="#000"/></svg>
<div class="pinp" style="left:744px;top:314px;width:42px;height:19px;line-height:17px">90</div>
<div class="plab" style="left:788px;top:317px;">度</div>
<div class="plab" style="right:197px;top:349px;">缩放(S):</div>
<div class="ptrack" style="left:708px;top:354px;width:98px"></div><div style="position:absolute;left:764px;top:349px;width:11px;height:12px"><svg width="11" height="12" viewBox="0 0 11 12"><path d="M0.5,11.5 L0.5,5 L5.5,0.5 L10.5,5 L10.5,11.5 Z" fill="#f4f4f0" stroke="#8aa08a" stroke-width="1"/><path d="M1,10.5 L10,10.5" stroke="#21a121" stroke-width="2"/></svg></div>
<div class="pinp" style="left:815px;top:346px;width:37px;height:19px;line-height:17px">100</div>
<div class="plab" style="left:855px;top:350px;">%</div>
<div class="pbtn" style="left:666px;top:380px;width:90px;height:19px;line-height:17px">设置为默认值</div>
<div class="pbtn" style="left:767px;top:380px;width:91px;height:19px;line-height:17px">复位为默认值</div>
</body></html>
